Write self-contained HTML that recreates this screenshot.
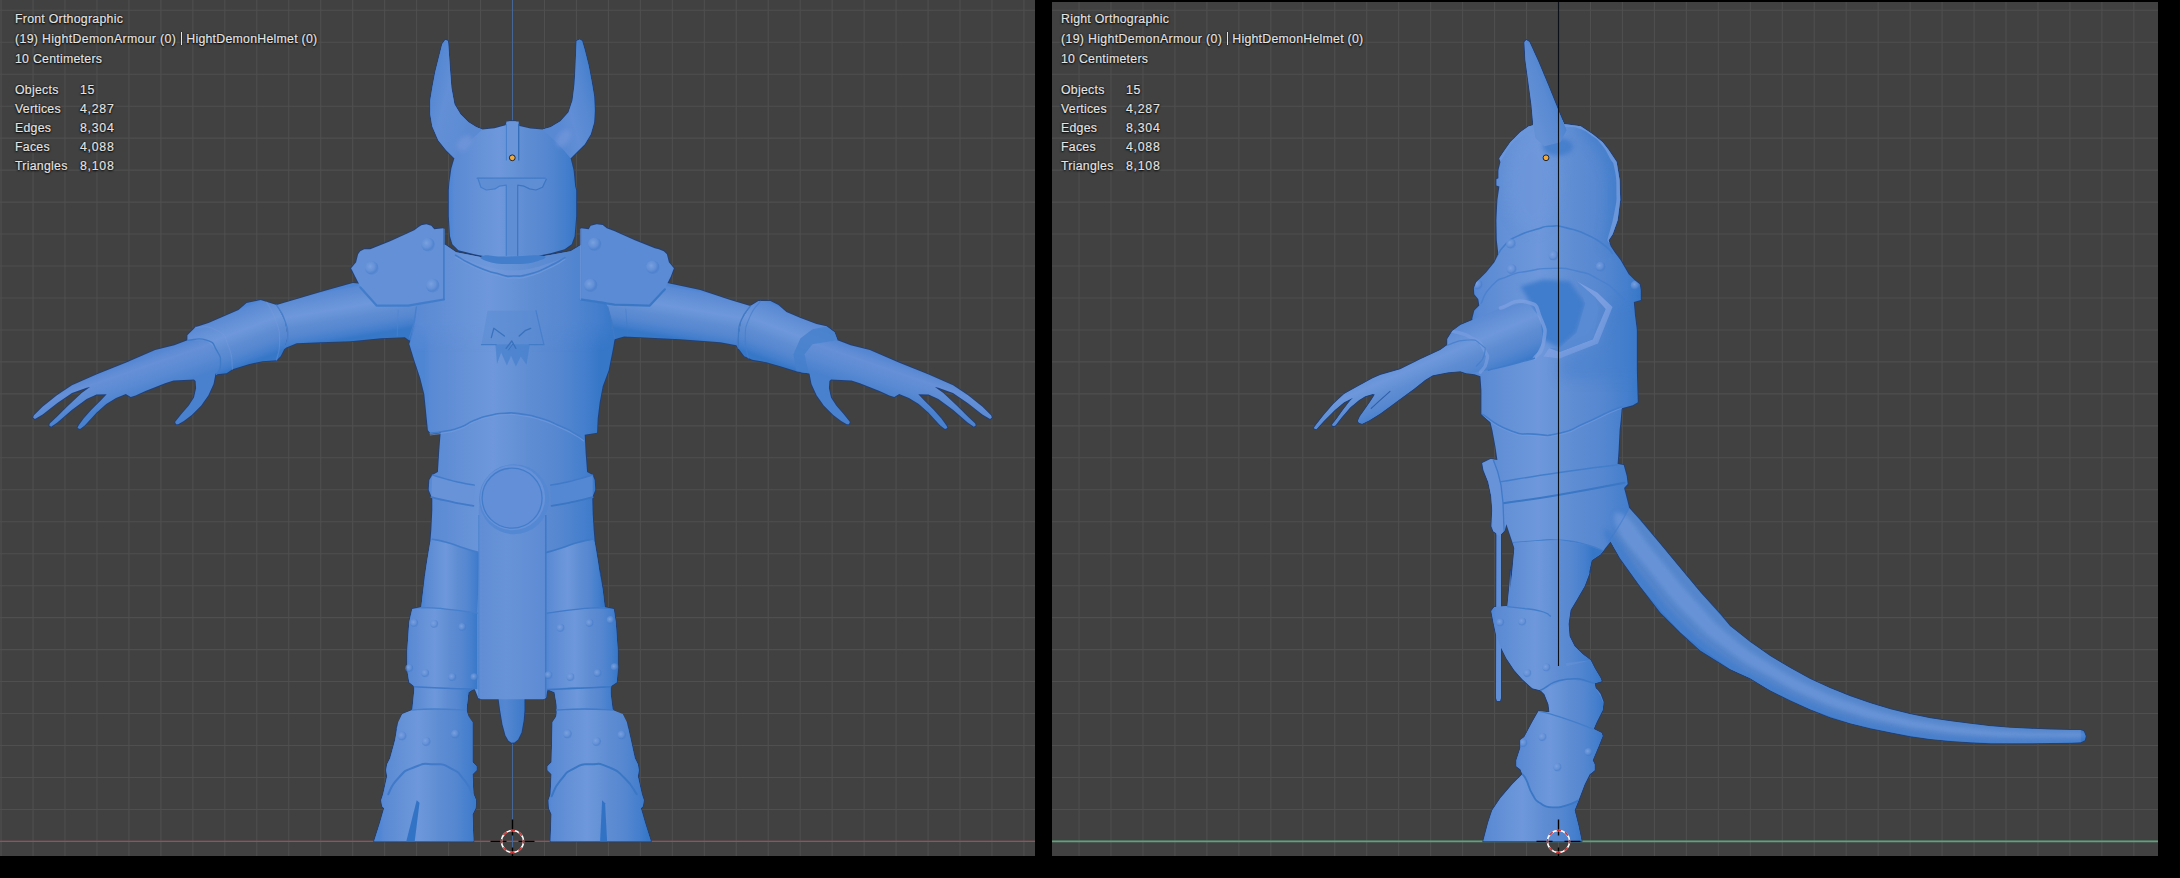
<!DOCTYPE html>
<html><head><meta charset="utf-8"><title>Blender viewport</title>
<style>
html,body{margin:0;padding:0;background:#000;}
body{width:2180px;height:878px;overflow:hidden;position:relative;font-family:"Liberation Sans",sans-serif;}
svg{position:absolute;left:0;top:0;}

.ov{position:absolute;color:#e4e4e4;font-size:12.3px;line-height:20px;white-space:pre;letter-spacing:0.27px;-webkit-text-stroke:0.2px #e4e4e4;text-shadow:0 0 2px rgba(0,0,0,.9),0 1px 2px rgba(0,0,0,.9),0 0 1px rgba(0,0,0,.8);}
.ov.n{letter-spacing:0.74px}
.bar{position:absolute;width:1.2px;height:13px;background:#e4e4e4;box-shadow:0 0 2px #000}

</style></head><body>
<svg width="2180" height="878" viewBox="0 0 2180 878">
<defs>
<clipPath id="cl"><rect x="0" y="0" width="1035" height="856"/></clipPath><clipPath id="cr"><rect x="1052" y="2" width="1106" height="854"/></clipPath><linearGradient id="gb" x1="0" y1="0" x2="1" y2="0"><stop offset="0" stop-color="#5b8bd4"/><stop offset="1" stop-color="#5b8bd4"/></linearGradient><linearGradient id="gh" gradientUnits="userSpaceOnUse" x1="449.5" y1="0" x2="576.5" y2="0"><stop offset="0" stop-color="#4f86d4"/><stop offset="0.04" stop-color="#5a8ad4"/><stop offset="0.12" stop-color="#5f8dd5"/><stop offset="0.39" stop-color="#6e98db"/><stop offset="0.6" stop-color="#5f8dd3"/><stop offset="0.77" stop-color="#5587d0"/><stop offset="0.91" stop-color="#457fcd"/><stop offset="1" stop-color="#3677c8"/></linearGradient><linearGradient id="gt" gradientUnits="userSpaceOnUse" x1="424.5" y1="0" x2="600" y2="0"><stop offset="0" stop-color="#4f86d4"/><stop offset="0.04" stop-color="#5a8ad4"/><stop offset="0.12" stop-color="#5f8dd5"/><stop offset="0.39" stop-color="#6e98db"/><stop offset="0.6" stop-color="#5f8dd3"/><stop offset="0.77" stop-color="#5587d0"/><stop offset="0.91" stop-color="#457fcd"/><stop offset="1" stop-color="#3677c8"/></linearGradient><linearGradient id="gtu" gradientUnits="userSpaceOnUse" x1="409" y1="0" x2="615" y2="0"><stop offset="0" stop-color="#4f86d4"/><stop offset="0.04" stop-color="#5a8ad4"/><stop offset="0.12" stop-color="#5f8dd5"/><stop offset="0.39" stop-color="#6e98db"/><stop offset="0.6" stop-color="#5f8dd3"/><stop offset="0.77" stop-color="#5587d0"/><stop offset="0.91" stop-color="#457fcd"/><stop offset="1" stop-color="#3677c8"/></linearGradient><linearGradient id="gfade" gradientUnits="userSpaceOnUse" x1="0" y1="322" x2="0" y2="352"><stop offset="0" stop-color="#fff"/><stop offset="1" stop-color="#000"/></linearGradient><mask id="mfade" maskUnits="userSpaceOnUse" x="380" y="230" width="270" height="130"><rect x="380" y="230" width="270" height="130" fill="url(#gfade)"/></mask><linearGradient id="gual" gradientUnits="userSpaceOnUse" x1="330" y1="290" x2="338.6" y2="340.3"><stop offset="0" stop-color="#4f86d4"/><stop offset="0.04" stop-color="#5a8ad4"/><stop offset="0.12" stop-color="#5f8dd5"/><stop offset="0.39" stop-color="#6e98db"/><stop offset="0.6" stop-color="#5f8dd3"/><stop offset="0.77" stop-color="#5587d0"/><stop offset="0.91" stop-color="#457fcd"/><stop offset="1" stop-color="#3677c8"/></linearGradient><linearGradient id="gcfl" gradientUnits="userSpaceOnUse" x1="240" y1="308" x2="259.5" y2="359.4"><stop offset="0" stop-color="#4f86d4"/><stop offset="0.04" stop-color="#5a8ad4"/><stop offset="0.12" stop-color="#5f8dd5"/><stop offset="0.39" stop-color="#6e98db"/><stop offset="0.6" stop-color="#5f8dd3"/><stop offset="0.77" stop-color="#5587d0"/><stop offset="0.91" stop-color="#457fcd"/><stop offset="1" stop-color="#3677c8"/></linearGradient><linearGradient id="ghdl" gradientUnits="userSpaceOnUse" x1="140" y1="356" x2="152.4" y2="392"><stop offset="0" stop-color="#5385d1"/><stop offset="0.3" stop-color="#6690d7"/><stop offset="0.65" stop-color="#5a8ad3"/><stop offset="1" stop-color="#4a81ce"/></linearGradient><linearGradient id="guar" gradientUnits="userSpaceOnUse" x1="695" y1="290" x2="686.4" y2="340.3"><stop offset="0" stop-color="#4f86d4"/><stop offset="0.04" stop-color="#5a8ad4"/><stop offset="0.12" stop-color="#5f8dd5"/><stop offset="0.39" stop-color="#6e98db"/><stop offset="0.6" stop-color="#5f8dd3"/><stop offset="0.77" stop-color="#5587d0"/><stop offset="0.91" stop-color="#457fcd"/><stop offset="1" stop-color="#3677c8"/></linearGradient><linearGradient id="gcfr" gradientUnits="userSpaceOnUse" x1="785" y1="308" x2="765.5" y2="359.4"><stop offset="0" stop-color="#4f86d4"/><stop offset="0.04" stop-color="#5a8ad4"/><stop offset="0.12" stop-color="#5f8dd5"/><stop offset="0.39" stop-color="#6e98db"/><stop offset="0.6" stop-color="#5f8dd3"/><stop offset="0.77" stop-color="#5587d0"/><stop offset="0.91" stop-color="#457fcd"/><stop offset="1" stop-color="#3677c8"/></linearGradient><linearGradient id="ghdr" gradientUnits="userSpaceOnUse" x1="885" y1="356" x2="872.6" y2="392"><stop offset="0" stop-color="#5385d1"/><stop offset="0.3" stop-color="#6690d7"/><stop offset="0.65" stop-color="#5a8ad3"/><stop offset="1" stop-color="#4a81ce"/></linearGradient><linearGradient id="gal" gradientUnits="userSpaceOnUse" x1="300" y1="291" x2="312" y2="347"><stop offset="0" stop-color="#4f86d4"/><stop offset="0.04" stop-color="#5a8ad4"/><stop offset="0.12" stop-color="#5f8dd5"/><stop offset="0.39" stop-color="#6e98db"/><stop offset="0.6" stop-color="#5f8dd3"/><stop offset="0.77" stop-color="#5587d0"/><stop offset="0.91" stop-color="#457fcd"/><stop offset="1" stop-color="#3677c8"/></linearGradient><linearGradient id="gar" gradientUnits="userSpaceOnUse" x1="725" y1="291" x2="713" y2="347"><stop offset="0" stop-color="#4f86d4"/><stop offset="0.04" stop-color="#5a8ad4"/><stop offset="0.12" stop-color="#5f8dd5"/><stop offset="0.39" stop-color="#6e98db"/><stop offset="0.6" stop-color="#5f8dd3"/><stop offset="0.77" stop-color="#5587d0"/><stop offset="0.91" stop-color="#457fcd"/><stop offset="1" stop-color="#3677c8"/></linearGradient><linearGradient id="gl" gradientUnits="userSpaceOnUse" x1="479" y1="0" x2="546" y2="0"><stop offset="0" stop-color="#608dd5"/><stop offset="0.4" stop-color="#6893d8"/><stop offset="1" stop-color="#5d8bd3"/></linearGradient><linearGradient id="gtl" gradientUnits="userSpaceOnUse" x1="407" y1="0" x2="478" y2="0"><stop offset="0" stop-color="#4f86d4"/><stop offset="0.04" stop-color="#5a8ad4"/><stop offset="0.12" stop-color="#5f8dd5"/><stop offset="0.39" stop-color="#6e98db"/><stop offset="0.6" stop-color="#5f8dd3"/><stop offset="0.77" stop-color="#5587d0"/><stop offset="0.91" stop-color="#457fcd"/><stop offset="1" stop-color="#3677c8"/></linearGradient><linearGradient id="gtr" gradientUnits="userSpaceOnUse" x1="547" y1="0" x2="618" y2="0"><stop offset="0" stop-color="#4f86d4"/><stop offset="0.04" stop-color="#5a8ad4"/><stop offset="0.12" stop-color="#5f8dd5"/><stop offset="0.39" stop-color="#6e98db"/><stop offset="0.6" stop-color="#5f8dd3"/><stop offset="0.77" stop-color="#5587d0"/><stop offset="0.91" stop-color="#457fcd"/><stop offset="1" stop-color="#3677c8"/></linearGradient><linearGradient id="ghl" gradientUnits="userSpaceOnUse" x1="428" y1="100" x2="472" y2="112"><stop offset="0" stop-color="#5587d2"/><stop offset="0.35" stop-color="#628fd6"/><stop offset="0.8" stop-color="#5f8dd5"/><stop offset="1" stop-color="#5b8ad3"/></linearGradient><linearGradient id="ghr" gradientUnits="userSpaceOnUse" x1="554" y1="112" x2="598" y2="100"><stop offset="0" stop-color="#5989d3"/><stop offset="0.35" stop-color="#618ed6"/><stop offset="0.75" stop-color="#5587d1"/><stop offset="1" stop-color="#4780cd"/></linearGradient><linearGradient id="gtt" gradientUnits="userSpaceOnUse" x1="497" y1="0" x2="526" y2="0"><stop offset="0" stop-color="#4f84d0"/><stop offset="0.3" stop-color="#5587d1"/><stop offset="1" stop-color="#3a79c9"/></linearGradient><linearGradient id="gll" gradientUnits="userSpaceOnUse" x1="424" y1="0" x2="480" y2="0"><stop offset="0" stop-color="#4f86d4"/><stop offset="0.04" stop-color="#5a8ad4"/><stop offset="0.12" stop-color="#5f8dd5"/><stop offset="0.39" stop-color="#6e98db"/><stop offset="0.6" stop-color="#5f8dd3"/><stop offset="0.77" stop-color="#5587d0"/><stop offset="0.91" stop-color="#457fcd"/><stop offset="1" stop-color="#3677c8"/></linearGradient><linearGradient id="glr" gradientUnits="userSpaceOnUse" x1="545" y1="0" x2="603" y2="0"><stop offset="0" stop-color="#4f86d4"/><stop offset="0.04" stop-color="#5a8ad4"/><stop offset="0.12" stop-color="#5f8dd5"/><stop offset="0.39" stop-color="#6e98db"/><stop offset="0.6" stop-color="#5f8dd3"/><stop offset="0.77" stop-color="#5587d0"/><stop offset="0.91" stop-color="#457fcd"/><stop offset="1" stop-color="#3677c8"/></linearGradient><linearGradient id="gsl" gradientUnits="userSpaceOnUse" x1="412" y1="0" x2="471" y2="0"><stop offset="0" stop-color="#4f86d4"/><stop offset="0.04" stop-color="#5a8ad4"/><stop offset="0.12" stop-color="#5f8dd5"/><stop offset="0.39" stop-color="#6e98db"/><stop offset="0.6" stop-color="#5f8dd3"/><stop offset="0.77" stop-color="#5587d0"/><stop offset="0.91" stop-color="#457fcd"/><stop offset="1" stop-color="#3677c8"/></linearGradient><linearGradient id="gsr" gradientUnits="userSpaceOnUse" x1="553" y1="0" x2="615" y2="0"><stop offset="0" stop-color="#4f86d4"/><stop offset="0.04" stop-color="#5a8ad4"/><stop offset="0.12" stop-color="#5f8dd5"/><stop offset="0.39" stop-color="#6e98db"/><stop offset="0.6" stop-color="#5f8dd3"/><stop offset="0.77" stop-color="#5587d0"/><stop offset="0.91" stop-color="#457fcd"/><stop offset="1" stop-color="#3677c8"/></linearGradient><linearGradient id="ggl" gradientUnits="userSpaceOnUse" x1="380" y1="0" x2="478" y2="0"><stop offset="0" stop-color="#4f86d4"/><stop offset="0.04" stop-color="#5a8ad4"/><stop offset="0.12" stop-color="#5f8dd5"/><stop offset="0.39" stop-color="#6e98db"/><stop offset="0.6" stop-color="#5f8dd3"/><stop offset="0.77" stop-color="#5587d0"/><stop offset="0.91" stop-color="#457fcd"/><stop offset="1" stop-color="#3677c8"/></linearGradient><linearGradient id="ggr" gradientUnits="userSpaceOnUse" x1="548" y1="0" x2="648" y2="0"><stop offset="0" stop-color="#4f86d4"/><stop offset="0.04" stop-color="#5a8ad4"/><stop offset="0.12" stop-color="#5f8dd5"/><stop offset="0.39" stop-color="#6e98db"/><stop offset="0.6" stop-color="#5f8dd3"/><stop offset="0.77" stop-color="#5587d0"/><stop offset="0.91" stop-color="#457fcd"/><stop offset="1" stop-color="#3677c8"/></linearGradient><linearGradient id="grt" gradientUnits="userSpaceOnUse" x1="1505" y1="0" x2="1593" y2="0"><stop offset="0" stop-color="#4f86d4"/><stop offset="0.04" stop-color="#5a8ad4"/><stop offset="0.12" stop-color="#5f8dd5"/><stop offset="0.39" stop-color="#6e98db"/><stop offset="0.6" stop-color="#5f8dd3"/><stop offset="0.77" stop-color="#5587d0"/><stop offset="0.91" stop-color="#457fcd"/><stop offset="1" stop-color="#3677c8"/></linearGradient><linearGradient id="grf" gradientUnits="userSpaceOnUse" x1="1483" y1="0" x2="1584" y2="0"><stop offset="0" stop-color="#4f86d4"/><stop offset="0.04" stop-color="#5a8ad4"/><stop offset="0.12" stop-color="#5f8dd5"/><stop offset="0.39" stop-color="#6e98db"/><stop offset="0.6" stop-color="#5f8dd3"/><stop offset="0.77" stop-color="#5587d0"/><stop offset="0.91" stop-color="#457fcd"/><stop offset="1" stop-color="#3677c8"/></linearGradient><linearGradient id="gr" gradientUnits="userSpaceOnUse" x1="1472" y1="0" x2="1642" y2="0"><stop offset="0" stop-color="#4f86d4"/><stop offset="0.04" stop-color="#5a8ad4"/><stop offset="0.12" stop-color="#5f8dd5"/><stop offset="0.39" stop-color="#6e98db"/><stop offset="0.6" stop-color="#5f8dd3"/><stop offset="0.77" stop-color="#5587d0"/><stop offset="0.91" stop-color="#457fcd"/><stop offset="1" stop-color="#3677c8"/></linearGradient><linearGradient id="grh" gradientUnits="userSpaceOnUse" x1="1528" y1="100" x2="1562" y2="88"><stop offset="0" stop-color="#6490d6"/><stop offset="0.5" stop-color="#598ad2"/><stop offset="1" stop-color="#3f7dcc"/></linearGradient><linearGradient id="gra" gradientUnits="userSpaceOnUse" x1="1440" y1="330" x2="1465" y2="388"><stop offset="0" stop-color="#4f86d4"/><stop offset="0.04" stop-color="#5a8ad4"/><stop offset="0.12" stop-color="#5f8dd5"/><stop offset="0.39" stop-color="#6e98db"/><stop offset="0.6" stop-color="#5f8dd3"/><stop offset="0.77" stop-color="#5587d0"/><stop offset="0.91" stop-color="#457fcd"/><stop offset="1" stop-color="#3677c8"/></linearGradient><linearGradient id="grk" gradientUnits="userSpaceOnUse" x1="1492" y1="0" x2="1602" y2="0"><stop offset="0" stop-color="#4f86d4"/><stop offset="0.04" stop-color="#5a8ad4"/><stop offset="0.12" stop-color="#5f8dd5"/><stop offset="0.39" stop-color="#6e98db"/><stop offset="0.6" stop-color="#5f8dd3"/><stop offset="0.77" stop-color="#5587d0"/><stop offset="0.91" stop-color="#457fcd"/><stop offset="1" stop-color="#3677c8"/></linearGradient><linearGradient id="grg" gradientUnits="userSpaceOnUse" x1="1516" y1="0" x2="1604" y2="0"><stop offset="0" stop-color="#4f86d4"/><stop offset="0.04" stop-color="#5a8ad4"/><stop offset="0.12" stop-color="#5f8dd5"/><stop offset="0.39" stop-color="#6e98db"/><stop offset="0.6" stop-color="#5f8dd3"/><stop offset="0.77" stop-color="#5587d0"/><stop offset="0.91" stop-color="#457fcd"/><stop offset="1" stop-color="#3677c8"/></linearGradient><filter id="b2" x="-20%" y="-20%" width="140%" height="140%"><feGaussianBlur stdDeviation="2"/></filter><filter id="b6" x="-30%" y="-30%" width="160%" height="160%"><feGaussianBlur stdDeviation="6"/></filter><radialGradient id="rv" cx="0.38" cy="0.38" r="0.62"><stop offset="0" stop-color="#7ba3e0" stop-opacity="0.95"/><stop offset="0.55" stop-color="#6893d8" stop-opacity="0.6"/><stop offset="0.85" stop-color="#447bc9" stop-opacity="0.55"/><stop offset="1" stop-color="#3f78c6" stop-opacity="0.25"/></radialGradient><clipPath id="cRb"><polygon points="1533.4,125.2 1528.4,126.6 1520.4,132.2 1510.4,142.3 1503.4,152.3 1499.4,158.3 1500.4,162.3 1498.4,170.3 1498.4,178.3 1496.4,179.3 1496.4,185.4 1499.4,186.4 1497.4,200.1 1496.4,220.2 1496.8,240.2 1498.4,254.2 1494.4,262.3 1486.3,272.3 1480.3,278.3 1476.3,282.3 1473.9,288.3 1474.3,294.3 1478.3,299.3 1479.3,305.4 1474.3,310.4 1472.3,318.4 1472.4,320.1 1460.4,325.1 1452.3,331.1 1447.3,339.1 1447.3,345.1 1440.3,350.1 1420.3,359.2 1400.2,369.2 1380.2,374.9 1372.7,378.3 1357.6,386.5 1344.1,394.1 1333.6,403.8 1323.8,415.1 1314.8,426.4 1313.9,428.3 1316.3,429.2 1323.8,421.1 1335.1,409.8 1344.1,402.3 1353.1,397.8 1350.1,400.8 1342.6,410.6 1336.6,418.9 1332.2,424.5 1332.7,426.1 1335.1,425.8 1341.1,418.1 1350.1,407.6 1359.1,400.1 1365.2,396.3 1372.7,394.1 1374.9,394.4 1370.4,401.6 1365.2,409.1 1359.9,416.6 1357.9,421.1 1359.0,422.8 1362.1,423.8 1368.9,420.4 1380.2,413.6 1391.5,405.3 1402.7,397.1 1414.0,388.8 1425.3,379.8 1432.8,375.3 1448.3,372.2 1460.4,371.2 1466.4,373.2 1474.4,374.2 1480.4,376.2 1481.4,390.2 1481.4,414.3 1490.4,422.3 1492.4,430.3 1495.4,446.4 1497.5,460.4 1497.4,460.1 1490.3,459.1 1482.3,463.1 1483.3,470.1 1488.3,482.1 1491.3,496.2 1492.3,510.2 1491.3,526.2 1493.4,531.2 1496.4,533.2 1496.0,698.3 1497.0,700.9 1500.0,700.9 1501.0,698.3 1501.0,534.2 1504.8,530.2 1506.4,524.2 1510.4,536.2 1514.4,548.3 1512.4,570.3 1510.4,590.4 1510.4,570.0 1509.4,586.0 1507.4,606.1 1494.4,607.1 1491.3,611.1 1493.4,622.1 1496.4,636.2 1500.4,646.2 1506.4,658.2 1514.4,670.2 1522.4,679.3 1532.4,688.3 1540.5,690.3 1544.5,694.3 1548.5,704.3 1549.5,712.3 1538.5,711.3 1532.4,722.1 1524.4,737.1 1520.4,740.1 1520.4,748.1 1516.4,760.2 1516.4,766.2 1520.4,769.2 1522.4,774.2 1512.4,784.2 1500.4,798.2 1492.3,810.3 1488.3,822.3 1483.3,841.3 1581.6,841.3 1578.5,826.3 1574.5,810.3 1578.5,800.3 1584.6,784.2 1589.6,774.2 1594.6,770.2 1594.6,764.2 1592.6,760.2 1598.6,746.1 1602.6,736.1 1601.6,733.1 1593.6,729.1 1596.6,722.1 1602.6,710.0 1603.6,702.0 1600.6,694.0 1597.6,690.0 1595.6,688.3 1594.6,683.3 1601.6,681.3 1600.6,678.2 1594.6,668.2 1590.6,660.2 1582.6,654.2 1574.5,646.2 1569.5,636.2 1568.5,624.1 1570.5,610.1 1576.5,600.1 1584.6,586.0 1590.6,570.0 1588.6,574.3 1591.6,560.3 1600.6,554.3 1610.6,541.3 1620.1,558.2 1640.2,586.2 1660.2,612.3 1680.3,632.3 1700.3,650.4 1730.0,669.1 1750.0,678.1 1770.1,690.2 1790.1,700.2 1810.2,709.2 1830.2,717.2 1850.3,723.2 1870.3,728.2 1890.4,732.3 1910.4,736.3 1930.5,738.9 1950.5,740.9 1970.6,742.3 1990.6,743.3 2010.6,743.3 2030.7,743.3 2050.7,742.9 2070.8,742.7 2080.8,742.3 2084.8,740.3 2085.8,736.3 2083.8,731.3 2080.8,729.9 2070.8,729.9 2050.7,729.5 2030.7,728.8 2010.6,727.8 1990.6,726.2 1970.6,723.8 1950.5,721.2 1930.5,718.2 1910.4,714.2 1890.4,709.2 1870.3,703.2 1850.3,696.2 1830.2,688.2 1810.2,679.1 1790.1,668.1 1770.1,656.1 1750.0,642.1 1730.0,626.0 1720.4,614.3 1700.3,592.3 1680.3,568.2 1660.2,544.1 1640.2,520.1 1629.2,508.1 1627.2,500.0 1624.1,488.0 1627.7,484.1 1626.7,476.1 1623.7,465.1 1617.6,464.1 1618.6,450.0 1619.6,430.0 1620.7,420.3 1621.7,408.3 1632.8,405.3 1637.8,402.3 1636.8,370.2 1636.8,330.1 1634.8,314.1 1633.8,302.0 1640.8,300.0 1640.8,290.0 1639.7,284.3 1634.7,280.3 1628.7,274.3 1620.6,260.3 1614.6,252.2 1610.6,246.2 1608.6,240.2 1612.6,234.2 1617.6,220.2 1620.2,200.1 1619.6,180.1 1616.6,162.0 1608.6,150.0 1602.6,142.3 1592.6,134.2 1580.6,126.2 1565.5,124.2"/><polygon points="1533.4,126.2 1531.4,104.2 1528.4,82.1 1525.4,60.1 1524.4,42.0 1526.4,40.0 1529.4,42.0 1538.5,62.1 1548.5,86.1 1557.5,108.2 1562.5,120.2 1566.5,130.2"/></clipPath>
</defs>
<rect x="0" y="0" width="2180" height="878" fill="#000"/>
<rect x="0" y="0" width="1035" height="856" fill="#414141"/>
<rect x="1052" y="2" width="1106" height="854" fill="#414141"/>
<g clip-path="url(#cl)"><path d="M1.06,0V856M33.02,0V856M64.99,0V856M96.95,0V856M128.92,0V856M160.88,0V856M192.85,0V856M224.81,0V856M256.78,0V856M288.75,0V856M320.71,0V856M352.68,0V856M384.64,0V856M416.61,0V856M448.57,0V856M480.54,0V856M512.50,0V856M544.47,0V856M576.43,0V856M608.39,0V856M640.36,0V856M672.33,0V856M704.29,0V856M736.25,0V856M768.22,0V856M800.18,0V856M832.15,0V856M864.12,0V856M896.08,0V856M928.05,0V856M960.01,0V856M991.98,0V856M1023.94,0V856M0,841.40H1035M0,809.43H1035M0,777.47H1035M0,745.50H1035M0,713.54H1035M0,681.57H1035M0,649.61H1035M0,617.64H1035M0,585.68H1035M0,553.71H1035M0,521.75H1035M0,489.78H1035M0,457.82H1035M0,425.85H1035M0,393.89H1035M0,361.92H1035M0,329.96H1035M0,297.99H1035M0,266.03H1035M0,234.06H1035M0,202.10H1035M0,170.13H1035M0,138.17H1035M0,106.20H1035M0,74.24H1035M0,42.27H1035M0,10.31H1035" stroke="#4f4f4f" stroke-width="1.1" fill="none"/></g>
<g clip-path="url(#cr)"><path d="M1079.03,0V856M1110.99,0V856M1142.95,0V856M1174.92,0V856M1206.88,0V856M1238.85,0V856M1270.82,0V856M1302.78,0V856M1334.74,0V856M1366.71,0V856M1398.67,0V856M1430.64,0V856M1462.61,0V856M1494.57,0V856M1526.54,0V856M1558.50,0V856M1590.46,0V856M1622.43,0V856M1654.39,0V856M1686.36,0V856M1718.33,0V856M1750.29,0V856M1782.26,0V856M1814.22,0V856M1846.18,0V856M1878.15,0V856M1910.12,0V856M1942.08,0V856M1974.05,0V856M2006.01,0V856M2037.97,0V856M2069.94,0V856M2101.90,0V856M2133.87,0V856M1052,841.40H2158M1052,809.43H2158M1052,777.47H2158M1052,745.50H2158M1052,713.54H2158M1052,681.57H2158M1052,649.61H2158M1052,617.64H2158M1052,585.68H2158M1052,553.71H2158M1052,521.75H2158M1052,489.78H2158M1052,457.82H2158M1052,425.85H2158M1052,393.89H2158M1052,361.92H2158M1052,329.96H2158M1052,297.99H2158M1052,266.03H2158M1052,234.06H2158M1052,202.10H2158M1052,170.13H2158M1052,138.17H2158M1052,106.20H2158M1052,74.24H2158M1052,42.27H2158M1052,10.31H2158" stroke="#4f4f4f" stroke-width="1.1" fill="none"/></g>
<line x1="0" y1="841.4" x2="1035" y2="841.4" stroke="#9a4f5a" stroke-width="1.2"/>
<line x1="1052" y1="841.4" x2="2158" y2="841.4" stroke="#5fa37c" stroke-width="1.6"/>
<line x1="512.5" y1="0" x2="512.5" y2="856" stroke="#466a9e" stroke-width="1" opacity="0.9"/>

<g id="leftfig">
<g stroke="#1f4079" stroke-width="1.8" stroke-linejoin="round"><polygon points="194.5,339.2 187.5,340.2 174.4,345.2 155.2,350.0 125.8,362.7 96.4,374.5 72.0,385.3 57.3,395.1 42.6,406.8 33.8,415.6 33.1,417.6 34.9,419.1 42.6,414.6 57.3,402.9 72.0,393.1 86.6,387.7 90.1,387.0 81.7,393.1 67.1,406.8 57.3,416.6 49.9,423.5 49.2,425.4 51.2,426.7 57.3,422.5 72.0,409.7 86.6,399.0 96.4,394.6 106.7,394.3 101.3,400.0 91.5,409.7 83.7,418.6 78.3,425.9 77.6,427.9 80.0,428.9 84.7,425.4 96.4,412.7 106.2,403.9 116.0,398.0 125.8,394.1 130.7,397.0 135.6,395.5 145.4,391.1 165.0,383.3 173.5,380.5 194.0,379.4 195.6,381.0 196.1,388.2 194.0,397.4 188.9,405.6 181.7,413.8 175.1,422.0 176.1,424.2 178.1,424.2 183.8,420.9 192.0,414.8 201.2,405.6 208.4,395.3 213.5,384.1 215.5,373.8 216.5,373.3 224.5,372.3 229.6,354.2 222.5,340.2" fill="url(#ghdl)" />
<polygon points="352.8,283.1 320.7,292.1 276.6,305.1 284.7,320.1 287.7,336.2 284.7,348.2 296.7,343.2 320.7,342.2 350.8,341.2 380.9,338.2 404.9,337.2 408.9,340.2 431.0,344.2 431.0,290.1" fill="url(#gual)" />
<polygon points="276.6,305.1 260.6,300.1 246.6,303.1 238.5,310.1 208.5,323.1 195.4,327.2 187.4,335.2 187.4,340.2 206.5,340.2 216.5,350.2 220.5,364.2 216.5,374.3 226.5,373.3 232.5,369.3 248.6,364.2 262.6,361.2 276.6,360.2 280.6,356.2 284.7,348.2 287.7,336.2 284.7,320.1" fill="url(#gcfl)" />
<polygon points="830.5,339.2 837.5,340.2 850.6,345.2 869.8,350.0 899.2,362.7 928.6,374.5 953.0,385.3 967.7,395.1 982.4,406.8 991.2,415.6 991.9,417.6 990.1,419.1 982.4,414.6 967.7,402.9 953.0,393.1 938.4,387.7 934.9,387.0 943.3,393.1 957.9,406.8 967.7,416.6 975.1,423.5 975.8,425.4 973.8,426.7 967.7,422.5 953.0,409.7 938.4,399.0 928.6,394.6 918.3,394.3 923.7,400.0 933.5,409.7 941.3,418.6 946.7,425.9 947.4,427.9 945.0,428.9 940.3,425.4 928.6,412.7 918.8,403.9 909.0,398.0 899.2,394.1 894.3,397.0 889.4,395.5 879.6,391.1 860.0,383.3 851.5,380.5 831.0,379.4 829.4,381.0 828.9,388.2 831.0,397.4 836.1,405.6 843.3,413.8 849.9,422.0 848.9,424.2 846.9,424.2 841.2,420.9 833.0,414.8 823.8,405.6 816.6,395.3 811.5,384.1 809.5,373.8 808.5,373.3 800.5,372.3 795.4,354.2 802.5,340.2" fill="url(#ghdr)" />
<polygon points="667.2,283.1 700.2,290.1 730.3,300.1 750.3,306.1 741.3,320.1 738.3,336.2 738.3,348.2 736.3,345.2 720.3,342.2 680.2,339.2 640.1,337.2 624.1,336.6 618.0,338.2 600.0,344.2 600.0,290.1" fill="url(#guar)" />
<polygon points="750.3,306.1 758.4,301.1 770.4,301.1 778.4,305.1 786.4,312.1 800.5,318.1 816.5,324.1 826.5,326.2 834.5,332.2 837.5,340.2 812.5,344.2 804.5,354.2 808.5,373.3 796.5,371.3 780.4,366.2 766.4,362.2 752.3,359.8 744.3,356.2 738.3,348.2 738.3,336.2 741.3,320.1" fill="url(#gcfr)" />
<polygon points="443.5,244.7 445.1,244.7 456.0,252.2 484.1,257.7 541.5,256.6 570.7,251.2 581.5,244.7 583.1,244.7 614.7,338.1 612.7,350.1 608.7,370.2 602.7,386.2 599.7,402.3 597.7,418.3 597.1,432.7 584.7,434.7 585.7,454.1 587.1,472.1 592.7,475.1 594.7,480.1 595.3,490.1 592.7,496.2 592.3,499.2 592.7,514.2 593.7,530.2 594.7,542.3 597.7,560.3 600.7,580.3 599.7,570.0 602.7,590.0 604.7,607.1 613.7,609.1 615.7,622.1 617.7,650.2 617.7,670.2 616.7,682.3 610.7,686.3 610.7,694.3 612.7,710.3 622.8,715.3 628.8,730.4 626.8,722.1 630.8,740.1 634.8,758.2 637.8,764.2 638.8,770.2 637.8,776.2 641.8,794.2 643.8,800.3 642.8,806.3 640.8,808.3 644.8,822.3 650.8,841.3 550.6,841.3 551.6,814.3 549.0,808.3 548.6,800.3 550.6,794.2 551.6,774.2 547.6,770.2 547.6,766.2 551.6,762.2 552.6,722.1 555.6,718.3 557.6,710.3 554.6,692.3 547.6,689.3 545.6,698.3 478.4,698.3 474.4,688.3 468.4,692.3 466.4,710.3 468.4,718.3 472.4,722.1 472.4,762.2 476.4,766.2 476.4,770.2 472.4,774.2 473.4,794.2 476.0,800.3 475.4,808.3 472.4,814.3 473.4,841.3 374.2,841.3 380.2,822.3 384.2,808.3 382.2,806.3 381.2,800.3 383.2,794.2 387.2,776.2 386.2,770.2 387.2,764.2 390.2,758.2 395.2,740.1 398.2,722.1 396.2,730.4 402.2,714.3 412.3,710.3 414.3,690.3 414.3,686.3 409.3,682.3 407.3,670.2 407.3,650.2 409.3,622.1 412.3,609.1 421.3,607.1 423.3,590.0 426.3,570.0 424.3,580.3 427.3,560.3 430.3,542.3 431.3,530.2 432.3,510.2 432.3,498.2 431.3,496.2 428.7,490.1 429.3,480.1 432.3,475.1 437.9,472.1 439.3,450.0 440.7,432.0 430.3,433.0 427.9,430.3 426.3,414.3 424.3,394.2 420.3,378.2 414.3,360.2 409.3,344.1" fill="url(#gt)" />
<polygon points="443.5,244.7 445.1,244.7 456.0,252.2 484.1,257.7 541.5,256.6 570.7,251.2 581.5,244.7 583.1,244.7 607.7,307 611.7,322 614.7,338.1 612.7,352 414.3,352 409.3,344.1 414.3,322 416.3,307" fill="url(#gtu)" mask="url(#mfade)"/>
<polygon points="498.5,698.3 500.1,710.3 502.5,724.4 505.5,735.4 508.5,740.8 511.5,742.8 514.5,742.4 518.1,739.4 521.5,732.4 523.7,720.3 524.5,710.3 524.5,698.3" fill="url(#gtt)" />
<polygon points="443.3,228.2 434.3,229.2 431.3,225.8 426.3,224.2 421.3,225.2 418.3,227.2 414.3,230.2 390.2,241.2 370.2,249.2 364.2,249.2 360.2,251.2 358.1,254.2 356.1,262.3 351.1,268.3 354.1,274.3 360.2,286.3 376.2,304.4 408.3,304.4 443.3,298.3" fill="#6390d7" />
<polygon points="581.1,228.2 588.7,229.2 590.7,225.8 596.7,224.2 602.7,225.0 606.7,228.2 614.7,231.2 634.8,240.2 654.8,248.2 658.8,249.2 663.8,251.2 666.9,254.2 668.9,262.3 673.9,268.3 670.9,276.3 664.9,288.3 649.8,304.4 614.7,303.4 581.1,298.3" fill="#5b8bd4" />
<polygon points="445.3,40.0 442.3,44.0 439.3,56.1 435.3,72.1 432.3,88.1 430.3,100.2 430.3,114.2 432.3,126.2 438.3,140.3 446.3,150.3 454.4,158.3 451.4,168.3 449.4,182.3 448.8,190.1 448.8,216.2 450.0,236.2 452.4,244.2 458.4,250.2 474.4,254.2 484.4,256.2 494.5,259.3 512.5,259.9 530.5,258.8 540.6,255.2 550.6,253.2 564.6,249.2 571.6,244.2 574.6,236.2 576.2,216.2 576.2,190.1 575.2,186.4 573.6,170.3 570.6,158.3 576.6,152.3 584.7,144.3 590.7,134.2 594.1,122.2 594.7,110.2 594.1,96.2 591.7,82.1 588.7,66.1 584.7,50.0 582.1,41.0 579.7,39.6 576.6,41.0 576.2,50.0 575.6,66.1 574.6,84.1 572.6,100.2 568.6,112.2 560.6,121.2 550.6,127.2 542.6,129.6 530.5,128.6 518.5,125.8 517.5,122.6 515.5,121.2 509.5,121.2 506.9,122.2 505.5,125.2 494.5,128.2 482.4,129.6 476.4,127.2 468.4,122.2 460.4,114.2 454.4,104.2 451.4,88.1 450.0,70.1 448.8,52.1 448.0,41.0" fill="url(#gh)" /></g>
<g id="Lsil"><polygon points="194.5,339.2 187.5,340.2 174.4,345.2 155.2,350.0 125.8,362.7 96.4,374.5 72.0,385.3 57.3,395.1 42.6,406.8 33.8,415.6 33.1,417.6 34.9,419.1 42.6,414.6 57.3,402.9 72.0,393.1 86.6,387.7 90.1,387.0 81.7,393.1 67.1,406.8 57.3,416.6 49.9,423.5 49.2,425.4 51.2,426.7 57.3,422.5 72.0,409.7 86.6,399.0 96.4,394.6 106.7,394.3 101.3,400.0 91.5,409.7 83.7,418.6 78.3,425.9 77.6,427.9 80.0,428.9 84.7,425.4 96.4,412.7 106.2,403.9 116.0,398.0 125.8,394.1 130.7,397.0 135.6,395.5 145.4,391.1 165.0,383.3 173.5,380.5 194.0,379.4 195.6,381.0 196.1,388.2 194.0,397.4 188.9,405.6 181.7,413.8 175.1,422.0 176.1,424.2 178.1,424.2 183.8,420.9 192.0,414.8 201.2,405.6 208.4,395.3 213.5,384.1 215.5,373.8 216.5,373.3 224.5,372.3 229.6,354.2 222.5,340.2" fill="url(#ghdl)" />
<polygon points="352.8,283.1 320.7,292.1 276.6,305.1 284.7,320.1 287.7,336.2 284.7,348.2 296.7,343.2 320.7,342.2 350.8,341.2 380.9,338.2 404.9,337.2 408.9,340.2 431.0,344.2 431.0,290.1" fill="url(#gual)" />
<polygon points="276.6,305.1 260.6,300.1 246.6,303.1 238.5,310.1 208.5,323.1 195.4,327.2 187.4,335.2 187.4,340.2 206.5,340.2 216.5,350.2 220.5,364.2 216.5,374.3 226.5,373.3 232.5,369.3 248.6,364.2 262.6,361.2 276.6,360.2 280.6,356.2 284.7,348.2 287.7,336.2 284.7,320.1" fill="url(#gcfl)" />
<polygon points="830.5,339.2 837.5,340.2 850.6,345.2 869.8,350.0 899.2,362.7 928.6,374.5 953.0,385.3 967.7,395.1 982.4,406.8 991.2,415.6 991.9,417.6 990.1,419.1 982.4,414.6 967.7,402.9 953.0,393.1 938.4,387.7 934.9,387.0 943.3,393.1 957.9,406.8 967.7,416.6 975.1,423.5 975.8,425.4 973.8,426.7 967.7,422.5 953.0,409.7 938.4,399.0 928.6,394.6 918.3,394.3 923.7,400.0 933.5,409.7 941.3,418.6 946.7,425.9 947.4,427.9 945.0,428.9 940.3,425.4 928.6,412.7 918.8,403.9 909.0,398.0 899.2,394.1 894.3,397.0 889.4,395.5 879.6,391.1 860.0,383.3 851.5,380.5 831.0,379.4 829.4,381.0 828.9,388.2 831.0,397.4 836.1,405.6 843.3,413.8 849.9,422.0 848.9,424.2 846.9,424.2 841.2,420.9 833.0,414.8 823.8,405.6 816.6,395.3 811.5,384.1 809.5,373.8 808.5,373.3 800.5,372.3 795.4,354.2 802.5,340.2" fill="url(#ghdr)" />
<polygon points="667.2,283.1 700.2,290.1 730.3,300.1 750.3,306.1 741.3,320.1 738.3,336.2 738.3,348.2 736.3,345.2 720.3,342.2 680.2,339.2 640.1,337.2 624.1,336.6 618.0,338.2 600.0,344.2 600.0,290.1" fill="url(#guar)" />
<polygon points="750.3,306.1 758.4,301.1 770.4,301.1 778.4,305.1 786.4,312.1 800.5,318.1 816.5,324.1 826.5,326.2 834.5,332.2 837.5,340.2 812.5,344.2 804.5,354.2 808.5,373.3 796.5,371.3 780.4,366.2 766.4,362.2 752.3,359.8 744.3,356.2 738.3,348.2 738.3,336.2 741.3,320.1" fill="url(#gcfr)" />
<polygon points="443.5,244.7 445.1,244.7 456.0,252.2 484.1,257.7 541.5,256.6 570.7,251.2 581.5,244.7 583.1,244.7 614.7,338.1 612.7,350.1 608.7,370.2 602.7,386.2 599.7,402.3 597.7,418.3 597.1,432.7 584.7,434.7 585.7,454.1 587.1,472.1 592.7,475.1 594.7,480.1 595.3,490.1 592.7,496.2 592.3,499.2 592.7,514.2 593.7,530.2 594.7,542.3 597.7,560.3 600.7,580.3 599.7,570.0 602.7,590.0 604.7,607.1 613.7,609.1 615.7,622.1 617.7,650.2 617.7,670.2 616.7,682.3 610.7,686.3 610.7,694.3 612.7,710.3 622.8,715.3 628.8,730.4 626.8,722.1 630.8,740.1 634.8,758.2 637.8,764.2 638.8,770.2 637.8,776.2 641.8,794.2 643.8,800.3 642.8,806.3 640.8,808.3 644.8,822.3 650.8,841.3 550.6,841.3 551.6,814.3 549.0,808.3 548.6,800.3 550.6,794.2 551.6,774.2 547.6,770.2 547.6,766.2 551.6,762.2 552.6,722.1 555.6,718.3 557.6,710.3 554.6,692.3 547.6,689.3 545.6,698.3 478.4,698.3 474.4,688.3 468.4,692.3 466.4,710.3 468.4,718.3 472.4,722.1 472.4,762.2 476.4,766.2 476.4,770.2 472.4,774.2 473.4,794.2 476.0,800.3 475.4,808.3 472.4,814.3 473.4,841.3 374.2,841.3 380.2,822.3 384.2,808.3 382.2,806.3 381.2,800.3 383.2,794.2 387.2,776.2 386.2,770.2 387.2,764.2 390.2,758.2 395.2,740.1 398.2,722.1 396.2,730.4 402.2,714.3 412.3,710.3 414.3,690.3 414.3,686.3 409.3,682.3 407.3,670.2 407.3,650.2 409.3,622.1 412.3,609.1 421.3,607.1 423.3,590.0 426.3,570.0 424.3,580.3 427.3,560.3 430.3,542.3 431.3,530.2 432.3,510.2 432.3,498.2 431.3,496.2 428.7,490.1 429.3,480.1 432.3,475.1 437.9,472.1 439.3,450.0 440.7,432.0 430.3,433.0 427.9,430.3 426.3,414.3 424.3,394.2 420.3,378.2 414.3,360.2 409.3,344.1" fill="url(#gt)" />
<polygon points="443.5,244.7 445.1,244.7 456.0,252.2 484.1,257.7 541.5,256.6 570.7,251.2 581.5,244.7 583.1,244.7 607.7,307 611.7,322 614.7,338.1 612.7,352 414.3,352 409.3,344.1 414.3,322 416.3,307" fill="url(#gtu)" mask="url(#mfade)"/>
<polygon points="498.5,698.3 500.1,710.3 502.5,724.4 505.5,735.4 508.5,740.8 511.5,742.8 514.5,742.4 518.1,739.4 521.5,732.4 523.7,720.3 524.5,710.3 524.5,698.3" fill="url(#gtt)" />
<polygon points="443.3,228.2 434.3,229.2 431.3,225.8 426.3,224.2 421.3,225.2 418.3,227.2 414.3,230.2 390.2,241.2 370.2,249.2 364.2,249.2 360.2,251.2 358.1,254.2 356.1,262.3 351.1,268.3 354.1,274.3 360.2,286.3 376.2,304.4 408.3,304.4 443.3,298.3" fill="#6390d7" />
<polygon points="581.1,228.2 588.7,229.2 590.7,225.8 596.7,224.2 602.7,225.0 606.7,228.2 614.7,231.2 634.8,240.2 654.8,248.2 658.8,249.2 663.8,251.2 666.9,254.2 668.9,262.3 673.9,268.3 670.9,276.3 664.9,288.3 649.8,304.4 614.7,303.4 581.1,298.3" fill="#5b8bd4" />
<polygon points="445.3,40.0 442.3,44.0 439.3,56.1 435.3,72.1 432.3,88.1 430.3,100.2 430.3,114.2 432.3,126.2 438.3,140.3 446.3,150.3 454.4,158.3 451.4,168.3 449.4,182.3 448.8,190.1 448.8,216.2 450.0,236.2 452.4,244.2 458.4,250.2 474.4,254.2 484.4,256.2 494.5,259.3 512.5,259.9 530.5,258.8 540.6,255.2 550.6,253.2 564.6,249.2 571.6,244.2 574.6,236.2 576.2,216.2 576.2,190.1 575.2,186.4 573.6,170.3 570.6,158.3 576.6,152.3 584.7,144.3 590.7,134.2 594.1,122.2 594.7,110.2 594.1,96.2 591.7,82.1 588.7,66.1 584.7,50.0 582.1,41.0 579.7,39.6 576.6,41.0 576.2,50.0 575.6,66.1 574.6,84.1 572.6,100.2 568.6,112.2 560.6,121.2 550.6,127.2 542.6,129.6 530.5,128.6 518.5,125.8 517.5,122.6 515.5,121.2 509.5,121.2 506.9,122.2 505.5,125.2 494.5,128.2 482.4,129.6 476.4,127.2 468.4,122.2 460.4,114.2 454.4,104.2 451.4,88.1 450.0,70.1 448.8,52.1 448.0,41.0" fill="url(#gh)" /></g>
<polygon points="445.3,40.0 442.3,44.0 439.3,56.1 435.3,72.1 432.3,88.1 430.3,100.2 430.3,114.2 432.3,126.2 438.3,140.3 446.3,150.3 454.4,158.3 466.4,144.3 482.4,129.6 476.4,127.2 468.4,122.2 460.4,114.2 454.4,104.2 451.4,88.1 450.0,70.1 448.8,52.1 448.0,41.0" fill="url(#ghl)" />
<polygon points="579.7,39.6 582.1,41.0 584.7,50.0 588.7,66.1 591.7,82.1 594.1,96.2 594.7,110.2 594.1,122.2 590.7,134.2 584.7,144.3 576.6,152.3 570.6,158.3 558.6,144.3 542.6,129.6 550.6,127.2 560.6,121.2 568.6,112.2 572.6,100.2 574.6,84.1 575.6,66.1 576.2,50.0 576.6,41.0" fill="url(#ghr)" />
<ellipse cx="464.4" cy="143.3" rx="9" ry="6" transform="rotate(-48 464.4 143.3)" fill="#7196da" opacity="0.8" filter="url(#b2)"/>
<ellipse cx="563.6" cy="138.2" rx="10" ry="6" transform="rotate(-55 563.6 138.2)" fill="#7196da" opacity="0.75" filter="url(#b2)"/>
<polygon points="432.3,539.3 430.3,542.3 427.3,560.3 424.3,580.3 423.3,590.0 421.3,607.1 477.4,613.1 479.4,552.7 464.4,548.3 446.3,542.3" fill="url(#gll)" />
<polygon points="592.7,539.3 594.7,542.3 597.7,560.3 600.7,580.3 602.7,590.0 604.7,607.1 547.0,613.1 545.6,552.7 560.6,548.3 578.7,542.3" fill="url(#glr)" />
<polygon points="414.3,686.3 414.3,690.3 412.3,710.3 412.3,710.0 466.4,710.0 466.4,690.0 466.4,710.3 468.4,692.3 474.4,688.3" fill="url(#gsl)" />
<polygon points="610.7,686.3 610.7,694.3 612.7,710.3 612.7,710.0 556.6,710.0 556.6,690.0 557.6,710.3 554.6,692.3 547.6,689.3" fill="url(#gsr)" />
<polygon points="412.3,710.0 402.2,714.1 398.2,722.1 395.2,740.1 390.2,758.2 387.2,764.2 386.2,770.2 387.2,776.2 383.2,794.2 381.2,800.3 382.2,806.3 384.2,808.3 380.2,822.3 374.2,841.3 473.4,841.3 472.4,814.3 475.4,808.3 476.0,800.3 473.4,794.2 472.4,774.2 476.4,770.2 476.4,766.2 472.4,762.2 472.4,722.1 468.4,716.1 466.4,710.0" fill="url(#ggl)" />
<polygon points="612.7,710.0 622.8,714.1 626.8,722.1 630.8,740.1 634.8,758.2 637.8,764.2 638.8,770.2 637.8,776.2 641.8,794.2 643.8,800.3 642.8,806.3 640.8,808.3 644.8,822.3 650.8,841.3 550.6,841.3 551.6,814.3 549.0,808.3 548.6,800.3 550.6,794.2 551.6,774.2 547.6,770.2 547.6,766.2 551.6,762.2 552.6,722.1 556.6,716.1 556.6,710.0" fill="url(#ggr)" />
<path d="M484.1,255.5C489.3,254.4 490.7,256.6 505.7,256.6C520.7,256.6 531.7,254.4 540.4,255.5C549.1,256.6 545.7,258.6 538.2,260.9C530.7,263.2 526.0,264.1 512.2,264.1C498.4,264.1 493.8,263.2 486.3,260.9C478.8,258.6 478.9,256.6 484.1,255.5Z" fill="#427ecc" />
<path d="M455.6,255.2C455.6,256.1 464.5,261.3 476.5,266.4C488.5,271.5 490.7,271.8 500.6,274.4C510.5,277.0 505.8,276.1 513.5,276.0C521.2,275.9 520.1,276.7 529.5,274.1C538.9,271.5 539.4,270.8 548.8,266.4C558.2,262.0 564.9,258.5 564.9,257.6C564.9,256.7 558.2,260.2 548.8,263.2C539.4,266.2 538.9,266.9 529.5,268.8C520.1,270.7 521.2,270.3 513.5,270.4C505.8,270.5 510.5,271.2 500.6,269.3C490.7,267.4 488.5,267.0 476.5,263.2C464.5,259.4 455.6,254.3 455.6,255.2Z" fill="#759bdd" opacity="0.45"/>
<path d="M455.6,255.2C462.6,258.9 461.5,260.0 476.5,266.4C491.5,272.8 488.3,271.2 500.6,274.4C512.9,277.6 503.9,276.1 513.5,276.0C523.1,275.9 517.7,277.3 529.5,274.1C541.3,270.9 537.0,271.9 548.8,266.4C560.6,260.9 559.5,260.5 564.9,257.6" fill="none" stroke="#437dca" stroke-width="1.6" stroke-linecap="round" />
<path d="M455.6,257.1C462.6,260.8 461.5,261.9 476.5,268.3C491.5,274.7 488.3,273.2 500.6,276.4C512.9,279.6 503.9,278.1 513.5,278.0C523.1,277.9 517.7,279.2 529.5,276.0C541.3,272.8 537.0,273.8 548.8,268.3C560.6,262.8 559.5,262.4 564.9,259.5" fill="none" stroke="#749bdd" stroke-width="1.2" stroke-linecap="round" opacity="0.7"/>
<polyline points="360.2,287.3 376.6,305.6 408.3,305.6 443.9,299.5" fill="none" stroke="#417dcb" stroke-width="2.2" stroke-linecap="round" stroke-linejoin="round" />
<polyline points="443.9,229.2 443.9,299.5" fill="none" stroke="#417bc8" stroke-width="1.6" stroke-linecap="round" stroke-linejoin="round" />
<polyline points="664.9,289.3 649.8,305.6 614.7,304.6 580.7,299.5" fill="none" stroke="#3a78c6" stroke-width="2.2" stroke-linecap="round" stroke-linejoin="round" />
<polyline points="580.5,229.2 580.5,299.5" fill="none" stroke="#769adc" stroke-width="1.2" stroke-linecap="round" stroke-linejoin="round" opacity="0.6"/>
<circle cx="428.1" cy="244.6" r="6.8" fill="url(#rv)"/>
<circle cx="371.8" cy="268.0" r="6.8" fill="url(#rv)"/>
<circle cx="432.7" cy="285.6" r="6.8" fill="url(#rv)"/>
<circle cx="594.7" cy="244.2" r="6.8" fill="url(#rv)"/>
<circle cx="652.8" cy="267.3" r="6.8" fill="url(#rv)"/>
<circle cx="590.7" cy="285.3" r="6.8" fill="url(#rv)"/>
<polyline points="416.3,307.0 414.3,322.1 409.3,338.1" fill="none" stroke="#467fcb" stroke-width="1.3" stroke-linecap="round" stroke-linejoin="round" />
<polyline points="398.2,310.0 397.2,336.1" fill="none" stroke="#4c83ce" stroke-width="1.0" stroke-linecap="round" stroke-linejoin="round" opacity="0.6"/>
<polyline points="607.7,307.0 611.7,322.1 614.7,338.1" fill="none" stroke="#407ac5" stroke-width="1.3" stroke-linecap="round" stroke-linejoin="round" />
<polyline points="625.8,309.0 627.8,336.1" fill="none" stroke="#407ac5" stroke-width="1.0" stroke-linecap="round" stroke-linejoin="round" opacity="0.5"/>
<path d="M276.6,305.1C279.3,310.1 281.0,309.7 284.7,320.1C288.4,330.5 287.7,326.8 287.7,336.2C287.7,345.6 285.7,344.2 284.7,348.2" fill="none" stroke="#467fcb" stroke-width="1.3" stroke-linecap="round" />
<path d="M266.6,302.1C269.6,308.1 271.3,307.4 275.6,320.1C279.9,332.8 279.3,326.8 279.6,340.2C279.9,353.6 277.6,353.5 276.6,360.2" fill="none" stroke="#7a9edf" stroke-width="1.2" stroke-linecap="round" opacity="0.35"/>
<path d="M188.4,340.2C194.4,340.2 197.1,336.9 206.5,340.2C215.9,343.5 211.8,342.2 216.5,350.2C221.2,358.2 220.5,356.2 220.5,364.2C220.5,372.2 217.8,370.9 216.5,374.3" fill="none" stroke="#407bc8" stroke-width="1.4" stroke-linecap="round" />
<path d="M195.4,327.2C202.4,328.2 205.5,323.9 216.5,330.2C227.5,336.5 223.2,333.2 228.5,346.2C233.8,359.2 231.2,361.6 232.5,369.3" fill="none" stroke="#7a9edf" stroke-width="1.2" stroke-linecap="round" opacity="0.35"/>
<path d="M750.3,306.1C747.3,310.8 745.3,310.1 741.3,320.1C737.3,330.1 739.3,326.8 738.3,336.2C737.3,345.6 738.3,344.2 738.3,348.2" fill="none" stroke="#407ac5" stroke-width="1.3" stroke-linecap="round" />
<path d="M760.4,301.1C756.7,306.8 754.3,305.7 749.3,318.1C744.3,330.5 745.6,324.8 745.3,338.2C745.0,351.6 747.3,351.5 748.3,358.2" fill="none" stroke="#457eca" stroke-width="1.1" stroke-linecap="round" opacity="0.7"/>
<polygon points="812.5,329.2 826.5,326.6 834.5,332.2 837.5,340.2 812.5,344.2 804.5,354.2 808.5,373.3 796.5,371.3 793.4,354.2 800.5,338.2" fill="#457fcc" opacity="0.8"/>
<path d="M430.3,433.3C435.0,432.6 434.3,433.3 444.3,431.3C454.3,429.3 450.4,431.0 460.4,427.3C470.4,423.6 464.4,424.3 474.4,420.3C484.4,416.3 480.5,417.6 490.5,415.3C500.5,413.0 494.5,413.8 504.5,413.3C514.5,412.8 508.5,412.2 520.5,413.9C532.5,415.6 527.2,414.2 540.6,418.3C554.0,422.4 549.3,421.3 560.6,426.3C571.9,431.3 566.9,429.0 574.6,433.3C582.3,437.6 580.7,437.3 583.7,439.3" fill="none" stroke="#437dca" stroke-width="1.6" stroke-linecap="round" />
<path d="M430.3,434.90000000000003C435.0,434.2 434.3,434.9 444.3,432.90000000000003C454.3,430.9 450.4,432.6 460.4,428.90000000000003C470.4,425.2 464.4,425.9 474.4,421.90000000000003C484.4,417.9 480.5,419.2 490.5,416.90000000000003C500.5,414.6 494.5,415.4 504.5,414.90000000000003C514.5,414.4 508.5,413.8 520.5,415.5C532.5,417.2 527.2,415.8 540.6,419.90000000000003C554.0,424.0 549.3,422.9 560.6,427.90000000000003C571.9,432.9 566.9,430.6 574.6,434.90000000000003C582.3,439.2 580.7,438.9 583.7,440.90000000000003" fill="none" stroke="#759bdd" stroke-width="1.2" stroke-linecap="round" opacity="0.6"/>
<polygon points="487.6,310.7 536.0,310.7 543.8,344.3 481.5,344.3" fill="#5889d2" opacity="0.5"/>
<polyline points="481.5,344.7 496.2,344.7" fill="none" stroke="#427bc6" stroke-width="1.2" stroke-linecap="round" stroke-linejoin="round" />
<polyline points="529.4,344.7 543.8,344.7" fill="none" stroke="#427bc6" stroke-width="1.2" stroke-linecap="round" stroke-linejoin="round" />
<polyline points="536.0,310.7 543.8,344.3" fill="none" stroke="#467fcb" stroke-width="1.2" stroke-linecap="round" stroke-linejoin="round" />
<polygon points="495.4,344.3 529.8,344.3 529.0,349.2 526.6,364.8 520.8,356.6 515.9,366.4 511.0,355.7 506.9,365.6 501.1,352.5 497.0,363.9" fill="#4680cd" opacity="0.7"/>
<polyline points="504.4,336.1 493.8,328.3 491.3,337.7" fill="none" stroke="#3972bc" stroke-width="1.3" stroke-linecap="round" stroke-linejoin="round" />
<polyline points="519.2,336.1 525.7,330.3 530.7,328.3" fill="none" stroke="#3972bc" stroke-width="1.3" stroke-linecap="round" stroke-linejoin="round" />
<polyline points="506.1,348.4 511.8,341.0 515.9,348.4" fill="none" stroke="#3972bc" stroke-width="1.3" stroke-linecap="round" stroke-linejoin="round" />
<polyline points="508.5,350.0 512.6,344.3" fill="none" stroke="#3972bc" stroke-width="1.0" stroke-linecap="round" stroke-linejoin="round" />
<polygon points="432.3,475.1 446.3,479.1 460.4,482.5 474.4,485.1 473.4,505.8 460.4,503.6 446.3,500.6 431.3,497.2" fill="#6893d9" />
<polygon points="592.7,475.1 578.7,479.1 564.6,482.5 550.6,485.1 551.6,505.8 564.6,503.6 578.7,500.6 592.7,497.2" fill="#5588d2" />
<path d="M432.3,475.1C437.0,476.4 436.9,476.6 446.3,479.1C455.7,481.6 451.0,480.5 460.4,482.5C469.8,484.5 469.7,484.2 474.4,485.1" fill="none" stroke="#437dca" stroke-width="1.4" stroke-linecap="round" />
<path d="M431.3,497.2C436.3,498.3 436.6,498.5 446.3,500.6C456.0,502.7 451.4,501.9 460.4,503.6C469.4,505.3 469.1,505.1 473.4,505.8" fill="none" stroke="#407ac8" stroke-width="1.8" stroke-linecap="round" />
<path d="M592.7,475.1C588.0,476.4 588.1,476.6 578.7,479.1C569.3,481.6 574.0,480.5 564.6,482.5C555.2,484.5 555.3,484.2 550.6,485.1" fill="none" stroke="#407ac8" stroke-width="1.4" stroke-linecap="round" />
<path d="M592.7,497.2C588.0,498.3 588.1,498.5 578.7,500.6C569.3,502.7 573.6,501.9 564.6,503.6C555.6,505.3 555.9,505.1 551.6,505.8" fill="none" stroke="#3976c3" stroke-width="1.8" stroke-linecap="round" />
<path d="M432.3,539.3C437.0,540.3 435.6,539.3 446.3,542.3C457.0,545.3 453.4,544.8 464.4,548.3C475.4,551.8 474.4,551.2 479.4,552.7" fill="none" stroke="#437dca" stroke-width="1.6" stroke-linecap="round" />
<path d="M592.7,539.3C588.0,540.3 589.4,539.3 578.7,542.3C568.0,545.3 571.6,544.8 560.6,548.3C549.6,551.8 550.6,551.2 545.6,552.7" fill="none" stroke="#3d79c6" stroke-width="1.6" stroke-linecap="round" />
<rect x="478.8" y="505.0" width="67.0" height="194.3" rx="3" fill="url(#gl)"/>
<line x1="545.8" y1="515.0" x2="545.8" y2="697.3" stroke="#3c78c4" stroke-width="1.4"/>
<line x1="478.8" y1="515.0" x2="478.8" y2="697.3" stroke="#4c83ce" stroke-width="1"/>
<circle cx="514.1" cy="499.2" r="35" fill="#5488d2"/>
<circle cx="512.6" cy="497.7" r="32.5" fill="#6792d9"/>
<circle cx="512.1" cy="498.2" r="30" fill="#628fd7" stroke="#437dca" stroke-width="1.3"/>
<polygon points="412.3,609.1 434.3,608.1 454.4,610.1 477.4,613.1 477.4,689.3 454.4,687.3 434.3,687.3 414.3,686.3 409.3,682.3 407.3,670.2 407.3,650.2 409.3,622.1" fill="url(#gtl)" />
<polygon points="613.7,609.1 590.7,608.1 570.6,610.1 547.0,613.1 547.0,689.3 570.6,687.3 590.7,687.3 610.7,686.3 616.7,682.3 617.7,670.2 617.7,650.2 615.7,622.1" fill="url(#gtr)" />
<path d="M421.3,607.5C429.6,608.0 427.6,607.2 446.3,609.1C465.0,611.0 467.0,611.8 477.4,613.1" fill="none" stroke="#467fcb" stroke-width="1.3" stroke-linecap="round" />
<path d="M604.7,607.5C596.0,608.0 597.9,607.2 578.7,609.1C559.5,611.0 557.6,611.8 547.0,613.1" fill="none" stroke="#407ac8" stroke-width="1.3" stroke-linecap="round" />
<path d="M414.3,686.7C425.0,687.2 426.3,687.6 446.3,688.3C466.3,689.0 465.0,688.6 474.4,688.7" fill="none" stroke="#407ac8" stroke-width="1.6" stroke-linecap="round" />
<path d="M610.7,686.7C600.0,687.2 599.7,687.4 578.7,688.3C557.7,689.2 558.0,689.1 547.6,689.5" fill="none" stroke="#3a77c4" stroke-width="1.6" stroke-linecap="round" />
<circle cx="414.3" cy="623.1" r="4" fill="url(#rv)"/>
<circle cx="434.3" cy="624.1" r="4" fill="url(#rv)"/>
<circle cx="462.4" cy="627.1" r="4" fill="url(#rv)"/>
<circle cx="409.3" cy="668.2" r="4" fill="url(#rv)"/>
<circle cx="425.3" cy="673.2" r="4" fill="url(#rv)"/>
<circle cx="452.4" cy="677.2" r="4" fill="url(#rv)"/>
<circle cx="474.4" cy="677.2" r="4" fill="url(#rv)"/>
<circle cx="560.6" cy="628.1" r="4" fill="url(#rv)"/>
<circle cx="589.7" cy="623.1" r="4" fill="url(#rv)"/>
<circle cx="610.7" cy="620.1" r="4" fill="url(#rv)"/>
<circle cx="548.6" cy="675.2" r="4" fill="url(#rv)"/>
<circle cx="570.6" cy="677.2" r="4" fill="url(#rv)"/>
<circle cx="597.7" cy="673.2" r="4" fill="url(#rv)"/>
<circle cx="614.7" cy="667.2" r="4" fill="url(#rv)"/>
<path d="M412.3,710.0C419.6,709.7 416.3,709.0 434.3,709.0C452.3,709.0 455.7,709.7 466.4,710.0" fill="none" stroke="#467fcb" stroke-width="1.3" stroke-linecap="round" />
<path d="M556.6,710.0C566.0,709.7 566.0,709.0 584.7,709.0C603.4,709.0 603.4,709.7 612.7,710.0" fill="none" stroke="#407ac8" stroke-width="1.3" stroke-linecap="round" />
<circle cx="402.2" cy="736.1" r="4.5" fill="url(#rv)"/>
<circle cx="426.3" cy="741.7" r="4.5" fill="url(#rv)"/>
<circle cx="455.4" cy="734.1" r="4.5" fill="url(#rv)"/>
<circle cx="567.6" cy="734.1" r="4.5" fill="url(#rv)"/>
<circle cx="596.7" cy="741.7" r="4.5" fill="url(#rv)"/>
<circle cx="621.8" cy="735.1" r="4.5" fill="url(#rv)"/>
<path d="M388.2,794.2C391.5,788.9 389.5,787.2 398.2,778.2C406.9,769.2 402.3,771.9 414.3,767.2C426.3,762.5 422.3,763.9 434.3,764.2C446.3,764.5 440.4,762.9 450.4,768.2C460.4,773.5 456.7,770.9 464.4,780.2C472.1,789.5 470.4,790.9 473.4,796.2" fill="none" stroke="#407ac8" stroke-width="2.0" stroke-linecap="round" />
<path d="M551.6,796.2C554.6,790.9 552.9,789.5 560.6,780.2C568.3,770.9 564.6,773.5 574.6,768.2C584.6,762.9 579.3,764.5 590.7,764.2C602.1,763.9 597.3,762.5 608.7,767.2C620.1,771.9 615.4,769.2 624.8,778.2C634.2,787.2 632.8,788.9 636.8,794.2" fill="none" stroke="#3a77c4" stroke-width="2.0" stroke-linecap="round" />
<polygon points="416.7,800.3 419.5,802.7 414.7,841.3 406.3,841.3" fill="#3373c6" />
<polygon points="602.1,800.3 605.1,803.3 607.1,841.3 600.1,841.3" fill="#3272c5" />
<rect x="506.4" y="121.5" width="12.3" height="39" fill="#6b95d9"/>
<line x1="518.7" y1="124" x2="518.7" y2="160.5" stroke="#326db8" stroke-width="1.3"/>
<line x1="506.4" y1="124" x2="506.4" y2="160.5" stroke="#477fcb" stroke-width="1"/>
<polygon points="478.2,178.9 545.8,178.9 542.5,187.3 536.0,190.0 529.6,188.9 524.1,186.2 517.7,185.1 517.7,255.5 506.3,255.5 506.3,185.1 499.3,186.2 494.9,188.9 486.3,190.0 480.9,187.3" fill="#5f8ed5" />
<polyline points="477.1,178.2 545.2,178.2" fill="none" stroke="#427bc6" stroke-width="1.3" stroke-linecap="round" stroke-linejoin="round" />
<polyline points="478.2,179.2 480.9,187.3 486.3,190.0 494.9,188.9 499.3,186.2 506.3,185.1 506.3,255.5" fill="none" stroke="#457eca" stroke-width="1.2" stroke-linecap="round" stroke-linejoin="round" />
<polyline points="546.3,179.2 542.5,187.3 536.0,190.0 529.6,188.9 524.1,186.2 517.7,185.1 517.7,255.5" fill="none" stroke="#3c76c1" stroke-width="1.2" stroke-linecap="round" stroke-linejoin="round" />
<circle cx="512.3" cy="157.8" r="2.9" fill="#f0a93a" stroke="#1d2535" stroke-width="1"/>
</g>
<g id="rightfig">
<g stroke="#1f4079" stroke-width="1.8" stroke-linejoin="round"><polygon points="1533.4,125.2 1528.4,126.6 1520.4,132.2 1510.4,142.3 1503.4,152.3 1499.4,158.3 1500.4,162.3 1498.4,170.3 1498.4,178.3 1496.4,179.3 1496.4,185.4 1499.4,186.4 1497.4,200.1 1496.4,220.2 1496.8,240.2 1498.4,254.2 1494.4,262.3 1486.3,272.3 1480.3,278.3 1476.3,282.3 1473.9,288.3 1474.3,294.3 1478.3,299.3 1479.3,305.4 1474.3,310.4 1472.3,318.4 1472.4,320.1 1460.4,325.1 1452.3,331.1 1447.3,339.1 1447.3,345.1 1440.3,350.1 1420.3,359.2 1400.2,369.2 1380.2,374.9 1372.7,378.3 1357.6,386.5 1344.1,394.1 1333.6,403.8 1323.8,415.1 1314.8,426.4 1313.9,428.3 1316.3,429.2 1323.8,421.1 1335.1,409.8 1344.1,402.3 1353.1,397.8 1350.1,400.8 1342.6,410.6 1336.6,418.9 1332.2,424.5 1332.7,426.1 1335.1,425.8 1341.1,418.1 1350.1,407.6 1359.1,400.1 1365.2,396.3 1372.7,394.1 1374.9,394.4 1370.4,401.6 1365.2,409.1 1359.9,416.6 1357.9,421.1 1359.0,422.8 1362.1,423.8 1368.9,420.4 1380.2,413.6 1391.5,405.3 1402.7,397.1 1414.0,388.8 1425.3,379.8 1432.8,375.3 1448.3,372.2 1460.4,371.2 1466.4,373.2 1474.4,374.2 1480.4,376.2 1481.4,390.2 1481.4,414.3 1490.4,422.3 1492.4,430.3 1495.4,446.4 1497.5,460.4 1497.4,460.1 1490.3,459.1 1482.3,463.1 1483.3,470.1 1488.3,482.1 1491.3,496.2 1492.3,510.2 1491.3,526.2 1493.4,531.2 1496.4,533.2 1496.0,698.3 1497.0,700.9 1500.0,700.9 1501.0,698.3 1501.0,534.2 1504.8,530.2 1506.4,524.2 1510.4,536.2 1514.4,548.3 1512.4,570.3 1510.4,590.4 1510.4,570.0 1509.4,586.0 1507.4,606.1 1494.4,607.1 1491.3,611.1 1493.4,622.1 1496.4,636.2 1500.4,646.2 1506.4,658.2 1514.4,670.2 1522.4,679.3 1532.4,688.3 1540.5,690.3 1544.5,694.3 1548.5,704.3 1549.5,712.3 1538.5,711.3 1532.4,722.1 1524.4,737.1 1520.4,740.1 1520.4,748.1 1516.4,760.2 1516.4,766.2 1520.4,769.2 1522.4,774.2 1512.4,784.2 1500.4,798.2 1492.3,810.3 1488.3,822.3 1483.3,841.3 1581.6,841.3 1578.5,826.3 1574.5,810.3 1578.5,800.3 1584.6,784.2 1589.6,774.2 1594.6,770.2 1594.6,764.2 1592.6,760.2 1598.6,746.1 1602.6,736.1 1601.6,733.1 1593.6,729.1 1596.6,722.1 1602.6,710.0 1603.6,702.0 1600.6,694.0 1597.6,690.0 1595.6,688.3 1594.6,683.3 1601.6,681.3 1600.6,678.2 1594.6,668.2 1590.6,660.2 1582.6,654.2 1574.5,646.2 1569.5,636.2 1568.5,624.1 1570.5,610.1 1576.5,600.1 1584.6,586.0 1590.6,570.0 1588.6,574.3 1591.6,560.3 1600.6,554.3 1610.6,541.3 1620.1,558.2 1640.2,586.2 1660.2,612.3 1680.3,632.3 1700.3,650.4 1730.0,669.1 1750.0,678.1 1770.1,690.2 1790.1,700.2 1810.2,709.2 1830.2,717.2 1850.3,723.2 1870.3,728.2 1890.4,732.3 1910.4,736.3 1930.5,738.9 1950.5,740.9 1970.6,742.3 1990.6,743.3 2010.6,743.3 2030.7,743.3 2050.7,742.9 2070.8,742.7 2080.8,742.3 2084.8,740.3 2085.8,736.3 2083.8,731.3 2080.8,729.9 2070.8,729.9 2050.7,729.5 2030.7,728.8 2010.6,727.8 1990.6,726.2 1970.6,723.8 1950.5,721.2 1930.5,718.2 1910.4,714.2 1890.4,709.2 1870.3,703.2 1850.3,696.2 1830.2,688.2 1810.2,679.1 1790.1,668.1 1770.1,656.1 1750.0,642.1 1730.0,626.0 1720.4,614.3 1700.3,592.3 1680.3,568.2 1660.2,544.1 1640.2,520.1 1629.2,508.1 1627.2,500.0 1624.1,488.0 1627.7,484.1 1626.7,476.1 1623.7,465.1 1617.6,464.1 1618.6,450.0 1619.6,430.0 1620.7,420.3 1621.7,408.3 1632.8,405.3 1637.8,402.3 1636.8,370.2 1636.8,330.1 1634.8,314.1 1633.8,302.0 1640.8,300.0 1640.8,290.0 1639.7,284.3 1634.7,280.3 1628.7,274.3 1620.6,260.3 1614.6,252.2 1610.6,246.2 1608.6,240.2 1612.6,234.2 1617.6,220.2 1620.2,200.1 1619.6,180.1 1616.6,162.0 1608.6,150.0 1602.6,142.3 1592.6,134.2 1580.6,126.2 1565.5,124.2" fill="url(#gr)" />
<polygon points="1533.4,126.2 1531.4,104.2 1528.4,82.1 1525.4,60.1 1524.4,42.0 1526.4,40.0 1529.4,42.0 1538.5,62.1 1548.5,86.1 1557.5,108.2 1562.5,120.2 1566.5,130.2" fill="url(#grh)" /></g>
<g id="Rsil"><polygon points="1533.4,125.2 1528.4,126.6 1520.4,132.2 1510.4,142.3 1503.4,152.3 1499.4,158.3 1500.4,162.3 1498.4,170.3 1498.4,178.3 1496.4,179.3 1496.4,185.4 1499.4,186.4 1497.4,200.1 1496.4,220.2 1496.8,240.2 1498.4,254.2 1494.4,262.3 1486.3,272.3 1480.3,278.3 1476.3,282.3 1473.9,288.3 1474.3,294.3 1478.3,299.3 1479.3,305.4 1474.3,310.4 1472.3,318.4 1472.4,320.1 1460.4,325.1 1452.3,331.1 1447.3,339.1 1447.3,345.1 1440.3,350.1 1420.3,359.2 1400.2,369.2 1380.2,374.9 1372.7,378.3 1357.6,386.5 1344.1,394.1 1333.6,403.8 1323.8,415.1 1314.8,426.4 1313.9,428.3 1316.3,429.2 1323.8,421.1 1335.1,409.8 1344.1,402.3 1353.1,397.8 1350.1,400.8 1342.6,410.6 1336.6,418.9 1332.2,424.5 1332.7,426.1 1335.1,425.8 1341.1,418.1 1350.1,407.6 1359.1,400.1 1365.2,396.3 1372.7,394.1 1374.9,394.4 1370.4,401.6 1365.2,409.1 1359.9,416.6 1357.9,421.1 1359.0,422.8 1362.1,423.8 1368.9,420.4 1380.2,413.6 1391.5,405.3 1402.7,397.1 1414.0,388.8 1425.3,379.8 1432.8,375.3 1448.3,372.2 1460.4,371.2 1466.4,373.2 1474.4,374.2 1480.4,376.2 1481.4,390.2 1481.4,414.3 1490.4,422.3 1492.4,430.3 1495.4,446.4 1497.5,460.4 1497.4,460.1 1490.3,459.1 1482.3,463.1 1483.3,470.1 1488.3,482.1 1491.3,496.2 1492.3,510.2 1491.3,526.2 1493.4,531.2 1496.4,533.2 1496.0,698.3 1497.0,700.9 1500.0,700.9 1501.0,698.3 1501.0,534.2 1504.8,530.2 1506.4,524.2 1510.4,536.2 1514.4,548.3 1512.4,570.3 1510.4,590.4 1510.4,570.0 1509.4,586.0 1507.4,606.1 1494.4,607.1 1491.3,611.1 1493.4,622.1 1496.4,636.2 1500.4,646.2 1506.4,658.2 1514.4,670.2 1522.4,679.3 1532.4,688.3 1540.5,690.3 1544.5,694.3 1548.5,704.3 1549.5,712.3 1538.5,711.3 1532.4,722.1 1524.4,737.1 1520.4,740.1 1520.4,748.1 1516.4,760.2 1516.4,766.2 1520.4,769.2 1522.4,774.2 1512.4,784.2 1500.4,798.2 1492.3,810.3 1488.3,822.3 1483.3,841.3 1581.6,841.3 1578.5,826.3 1574.5,810.3 1578.5,800.3 1584.6,784.2 1589.6,774.2 1594.6,770.2 1594.6,764.2 1592.6,760.2 1598.6,746.1 1602.6,736.1 1601.6,733.1 1593.6,729.1 1596.6,722.1 1602.6,710.0 1603.6,702.0 1600.6,694.0 1597.6,690.0 1595.6,688.3 1594.6,683.3 1601.6,681.3 1600.6,678.2 1594.6,668.2 1590.6,660.2 1582.6,654.2 1574.5,646.2 1569.5,636.2 1568.5,624.1 1570.5,610.1 1576.5,600.1 1584.6,586.0 1590.6,570.0 1588.6,574.3 1591.6,560.3 1600.6,554.3 1610.6,541.3 1620.1,558.2 1640.2,586.2 1660.2,612.3 1680.3,632.3 1700.3,650.4 1730.0,669.1 1750.0,678.1 1770.1,690.2 1790.1,700.2 1810.2,709.2 1830.2,717.2 1850.3,723.2 1870.3,728.2 1890.4,732.3 1910.4,736.3 1930.5,738.9 1950.5,740.9 1970.6,742.3 1990.6,743.3 2010.6,743.3 2030.7,743.3 2050.7,742.9 2070.8,742.7 2080.8,742.3 2084.8,740.3 2085.8,736.3 2083.8,731.3 2080.8,729.9 2070.8,729.9 2050.7,729.5 2030.7,728.8 2010.6,727.8 1990.6,726.2 1970.6,723.8 1950.5,721.2 1930.5,718.2 1910.4,714.2 1890.4,709.2 1870.3,703.2 1850.3,696.2 1830.2,688.2 1810.2,679.1 1790.1,668.1 1770.1,656.1 1750.0,642.1 1730.0,626.0 1720.4,614.3 1700.3,592.3 1680.3,568.2 1660.2,544.1 1640.2,520.1 1629.2,508.1 1627.2,500.0 1624.1,488.0 1627.7,484.1 1626.7,476.1 1623.7,465.1 1617.6,464.1 1618.6,450.0 1619.6,430.0 1620.7,420.3 1621.7,408.3 1632.8,405.3 1637.8,402.3 1636.8,370.2 1636.8,330.1 1634.8,314.1 1633.8,302.0 1640.8,300.0 1640.8,290.0 1639.7,284.3 1634.7,280.3 1628.7,274.3 1620.6,260.3 1614.6,252.2 1610.6,246.2 1608.6,240.2 1612.6,234.2 1617.6,220.2 1620.2,200.1 1619.6,180.1 1616.6,162.0 1608.6,150.0 1602.6,142.3 1592.6,134.2 1580.6,126.2 1565.5,124.2" fill="url(#gr)" />
<polygon points="1533.4,126.2 1531.4,104.2 1528.4,82.1 1525.4,60.1 1524.4,42.0 1526.4,40.0 1529.4,42.0 1538.5,62.1 1548.5,86.1 1557.5,108.2 1562.5,120.2 1566.5,130.2" fill="url(#grh)" /></g>
<g clip-path="url(#cRb)"><ellipse cx="1532.2" cy="183.5" rx="26" ry="48" fill="#6f98db" opacity="0.55" filter="url(#b6)"/>
<polygon points="1573.2,123.7 1627.9,123.7 1627.9,246.7 1604.0,246.7 1609.1,212.5 1609.1,178.3 1598.9,152.7 1583.5,135.6" fill="#3c7bcb" opacity="0.55" filter="url(#b6)"/>
<path d="M1535.7,126.2C1540.2,125.5 1539.1,124.8 1549.3,124.0C1559.5,123.2 1556.1,123.2 1566.4,123.7C1576.7,124.2 1571.0,122.3 1580.1,125.4C1589.2,128.5 1585.7,127.4 1593.7,133.1C1601.7,138.8 1597.7,134.8 1604.0,142.5C1610.3,150.2 1607.9,147.6 1612.5,156.1C1617.1,164.6 1615.3,156.7 1617.7,168.1C1620.1,179.5 1619.7,175.5 1619.7,190.3C1619.7,205.1 1620.7,196.0 1617.7,212.5C1614.7,229.0 1613.1,230.7 1610.8,239.8" fill="none" stroke="#6c96da" stroke-width="6.6" stroke-linecap="round" />
<path d="M1499.8,157.8C1502.6,153.3 1501.5,152.2 1508.3,144.2C1515.1,136.2 1511.7,139.7 1520.3,133.9C1528.9,128.1 1529.4,129.1 1534.0,126.7" fill="none" stroke="#6c96da" stroke-width="5.5" stroke-linecap="round" />
<ellipse cx="1557.9" cy="146.7" rx="15" ry="9" fill="#407bca" opacity="0.8" filter="url(#b2)"/>
<polygon points="1533.4,126.2 1531.4,104.2 1528.4,82.1 1525.4,60.1 1524.4,42.0 1526.4,40.0 1529.4,42.0 1538.5,62.1 1548.5,86.1 1557.5,108.2 1562.5,120.2 1566.5,130.2 1560.5,142.3 1544.5,146.3 1535.4,138.2" fill="url(#grh)" />
<path d="M1496.4,256.9C1499.2,252.9 1498.1,251.8 1504.9,245.0C1511.7,238.2 1506.6,241.5 1516.9,236.4C1527.2,231.3 1524.3,233.0 1535.7,229.6C1547.1,226.2 1540.8,226.8 1551.0,226.2C1561.2,225.6 1554.4,225.1 1566.4,227.9C1578.4,230.7 1574.4,229.0 1586.9,234.7C1599.4,240.4 1595.5,238.7 1604.0,245.0C1612.5,251.3 1609.7,250.7 1612.5,253.5" fill="none" stroke="#437ecb" stroke-width="1.6" stroke-linecap="round" />
<path d="M1481.0,303.5C1484.4,297.8 1482.1,295.5 1491.2,286.4C1500.3,277.3 1495.8,281.2 1508.3,276.1C1520.8,271.0 1514.0,273.6 1528.8,271.0C1543.6,268.4 1536.7,268.4 1552.7,268.4C1568.7,268.4 1561.3,267.3 1576.7,271.0C1592.1,274.7 1584.7,271.5 1598.9,279.5C1613.1,287.5 1608.6,284.6 1619.4,294.9C1630.2,305.2 1627.3,305.2 1631.3,310.3" fill="none" stroke="#4680cd" stroke-width="1.4" stroke-linecap="round" opacity="0.8"/>
<polygon points="1520.3,286.4 1542.5,279.5 1569.8,281.2 1585.2,303.5 1576.7,332.5 1559.6,347.9 1542.5,339.3 1535.7,312.0" fill="#417dcc" filter="url(#b2)"/>
<polygon points="1576.7,281.2 1597.2,292.4 1612.5,306.9 1598.0,343.6 1559.6,358.5 1543.3,356.4 1549.3,347.9 1559.6,352.1 1592.9,339.3 1605.7,308.9 1595.4,297.5" fill="#7a9ee0" />
<polygon points="1576.7,281.2 1585.2,303.5 1576.7,332.5 1559.6,347.9 1549.3,347.9 1559.6,352.1 1592.9,339.3 1598.9,310.3 1595.4,297.5" fill="#598bd4" />
<polygon points="1612.5,306.9 1645.0,298.3 1645.0,380.0 1559.6,380.0 1559.6,358.5 1598.0,343.6" fill="#3c7bcb" opacity="0.35" filter="url(#b6)"/>
<polygon points="1500.5,308.0 1526.5,302.0 1540.6,318.1 1542.6,342.1 1534.5,358.2 1512.5,364.2 1488.4,370.2 1466.4,373.2 1460.4,371.2 1448.3,372.2 1432.8,375.3 1425.3,379.8 1414.0,388.8 1402.7,397.1 1391.5,405.3 1380.2,413.6 1368.9,420.4 1362.1,423.8 1359.0,422.8 1357.9,421.1 1359.9,416.6 1365.2,409.1 1370.4,401.6 1374.9,394.4 1372.7,394.1 1365.2,396.3 1359.1,400.1 1350.1,407.6 1341.1,418.1 1335.1,425.8 1332.7,426.1 1332.2,424.5 1336.6,418.9 1342.6,410.6 1350.1,400.8 1353.1,397.8 1344.1,402.3 1335.1,409.8 1323.8,421.1 1316.3,429.2 1313.9,428.3 1314.8,426.4 1323.8,415.1 1333.6,403.8 1344.1,394.1 1357.6,386.5 1372.7,378.3 1380.2,374.9 1400.2,369.2 1420.3,359.2 1440.3,350.1 1447.3,345.1 1447.3,339.1 1452.3,331.1 1460.4,325.1 1472.4,320.1" fill="url(#gra)" />
<polyline points="1390.0,391.4 1380.2,400.1 1371.2,408.3" fill="none" stroke="#2f5fa8" stroke-width="1.1" stroke-linecap="round" stroke-linejoin="round" />
<path d="M1500.5,308.0C1509.2,306.0 1513.1,298.6 1526.5,302.0C1539.9,305.4 1534.9,304.7 1540.6,318.1C1546.3,331.5 1545.6,328.7 1543.6,342.1C1541.6,355.5 1537.5,352.8 1534.5,358.2" fill="none" stroke="#7da0e1" stroke-width="3.6" stroke-linecap="round" opacity="0.75"/>
<path d="M1534.5,358.2C1527.2,360.2 1527.9,360.2 1512.5,364.2C1497.1,368.2 1496.4,368.2 1488.4,370.2" fill="none" stroke="#407bca" stroke-width="1.4" stroke-linecap="round" />
<path d="M1452.3,331.1C1459.0,333.4 1461.7,331.8 1472.4,338.1C1483.1,344.4 1479.7,342.1 1484.4,350.1C1489.1,358.1 1487.7,354.8 1486.4,362.2C1485.1,369.6 1482.4,368.9 1480.4,372.2" fill="none" stroke="#779ddf" stroke-width="3.4" stroke-linecap="round" opacity="0.7"/>
<path d="M1447.3,345.1C1453.7,343.4 1455.4,340.4 1466.4,340.1C1477.4,339.8 1474.4,339.4 1480.4,344.1C1486.4,348.8 1485.7,346.7 1484.4,354.1C1483.1,361.5 1479.1,362.2 1476.4,366.2" fill="none" stroke="#437ecb" stroke-width="1.2" stroke-linecap="round" opacity="0.8"/>
<circle cx="1510.9" cy="243.7" r="5" fill="url(#rv)"/>
<circle cx="1511.7" cy="269.3" r="5" fill="url(#rv)"/>
<circle cx="1553.6" cy="255.6" r="5" fill="url(#rv)"/>
<circle cx="1600.6" cy="266.7" r="5" fill="url(#rv)"/>
<circle cx="1635.6" cy="285.5" r="5" fill="url(#rv)"/>
<circle cx="1477.6" cy="284.7" r="5" fill="url(#rv)"/>
<path d="M1482.7,414.4C1491.2,419.5 1491.2,423.2 1508.3,429.8C1525.4,436.4 1516.9,433.0 1534.0,434.1C1551.1,435.2 1542.5,436.9 1559.6,433.2C1576.7,429.5 1568.1,430.4 1585.2,423.0C1602.3,415.6 1598.3,416.4 1610.8,411.0C1623.3,405.6 1618.8,408.1 1622.8,406.7" fill="none" stroke="#427dcb" stroke-width="1.6" stroke-linecap="round" />
<path d="M1482.7,415.9C1491.2,421.0 1491.2,424.7 1508.3,431.3C1525.4,437.9 1516.9,434.5 1534.0,435.6C1551.1,436.7 1542.5,438.4 1559.6,434.7C1576.7,431.0 1568.1,431.9 1585.2,424.5C1602.3,417.1 1598.3,417.9 1610.8,412.5C1623.3,407.1 1618.8,409.6 1622.8,408.2" fill="none" stroke="#749bdd" stroke-width="1.1" stroke-linecap="round" opacity="0.6"/>
<path d="M1499.8,481.9C1519.7,478.8 1520.3,478.2 1559.6,472.5C1598.9,466.8 1598.3,467.4 1617.7,464.8" fill="none" stroke="#437ecb" stroke-width="1.4" stroke-linecap="round" />
<path d="M1503.2,503.2C1522.0,500.4 1519.2,501.5 1559.6,494.7C1600.0,487.9 1602.9,486.7 1624.5,482.7" fill="none" stroke="#3a77c4" stroke-width="2" stroke-linecap="round" />
<polygon points="1481.9,463.2 1492.8,458.4 1497.6,471.4 1501.0,485.1 1503.0,502.9 1503.7,522.0 1504.4,535.7 1501.0,536.3 1492.8,532.9 1492.1,516.5 1490.7,498.8 1487.3,481.0" fill="#6893d9" />
<polyline points="1492.8,458.4 1497.6,471.4 1501.0,485.1 1503.0,502.9 1503.7,522.0 1504.4,535.7" fill="none" stroke="#407ac8" stroke-width="1.3" stroke-linecap="round" stroke-linejoin="round" />
<path d="M1513.5,542.7C1520.9,542.1 1520.3,541.9 1535.7,541.0C1551.1,540.1 1543.1,539.0 1559.6,540.1C1576.1,541.2 1570.4,540.7 1585.2,544.4C1600.0,548.1 1597.7,548.9 1604.0,551.2" fill="none" stroke="#437ecb" stroke-width="1.4" stroke-linecap="round" />
<polygon points="1513.5,542.7 1535.7,541 1559.6,540.1 1585.2,544.4 1604,551.2 1610.6,541.2 1600.6,554.3 1591.6,560.3 1588.6,574.3 1584.5,586 1576.5,600.1 1570.5,610.1 1568.5,624.1 1569.5,636.1 1574.5,646.2 1582.5,654.2 1590.6,660.2 1550,665 1507.4,606.1 1509.4,586 1512.4,570.3 1514.4,548.3" fill="url(#grt)" />
<polygon points="1540.5,690.3 1566.5,679.3 1594.6,683.3 1595.6,688.3 1600.6,696.3 1603.6,704.3 1602.6,714.3 1602.6,710.0 1596.6,722.1 1593.6,729.1 1560.5,717.1 1538.5,711.0 1550.1,712.1 1549.5,712.3 1548.5,704.3 1544.5,694.3" fill="url(#grg)" />
<polygon points="1522.4,774.2 1512.4,784.2 1500.4,798.2 1492.3,810.3 1488.3,822.3 1483.3,841.3 1581.6,841.3 1578.5,826.3 1574.5,810.3 1578.5,800.3 1566.5,805.3 1552.5,807.3 1540.5,803.3 1532.4,794.2 1526.4,780.2" fill="url(#grf)" />
<polygon points="1629.2,508.1 1660.2,544.1 1700.3,592.3 1730.0,626.0 1770.1,656.1 1810.2,679.1 1850.3,696.2 1890.4,709.2 1930.5,718.2 1970.6,723.8 2010.6,727.8 2050.7,729.5 2080.8,729.9 2080.8,742.3 2050.7,742.9 2010.6,743.3 1970.6,742.3 1930.5,738.9 1890.4,732.3 1850.3,723.2 1810.2,709.2 1770.1,690.2 1730.0,669.1 1680.3,632.3 1640.2,586.2 1609.1,541.1" fill="#5586cc" />
<path d="M1624.8,515.4C1635.1,522.2 1636.8,530.5 1655.8,553.4C1674.8,576.3 1676.1,579.2 1695.9,601.1C1715.7,623.0 1710.2,618.8 1730.0,635.5C1749.8,652.2 1748.7,650.2 1770.1,663.6C1791.5,677.0 1788.8,675.4 1810.2,685.7C1831.6,696.0 1828.9,694.5 1850.3,702.1C1871.7,709.7 1869.0,708.8 1890.4,714.3C1911.8,719.8 1909.1,719.2 1930.5,722.8C1951.9,726.4 1949.2,725.7 1970.6,727.9C1992.0,730.1 1989.2,730.0 2010.6,731.2C2032.0,732.4 2032.0,732.0 2050.7,732.4C2069.4,732.8 2072.8,731.3 2080.8,732.6C2088.8,733.9 2088.8,736.0 2080.8,737.3C2072.8,738.6 2069.4,737.6 2050.7,737.5C2032.0,737.4 2032.0,737.8 2010.6,737.1C1989.2,736.4 1992.0,736.6 1970.6,734.9C1949.2,733.2 1951.9,733.7 1930.5,730.6C1909.1,727.5 1911.8,728.0 1890.4,723.1C1869.0,718.2 1871.7,719.3 1850.3,712.4C1828.9,705.5 1831.6,706.7 1810.2,697.2C1788.8,687.7 1791.5,688.7 1770.1,676.6C1748.7,664.5 1751.8,668.0 1730.0,651.9C1708.2,635.8 1710.1,638.3 1688.3,616.3C1666.5,594.3 1667.2,593.0 1648.2,569.4C1629.2,545.8 1623.3,542.3 1617.1,527.9C1610.9,513.5 1614.5,508.6 1624.8,515.4Z" fill="#6f98db" opacity="0.7" filter="url(#b2)"/>
<path d="M1613.1,534.5C1622.7,543.8 1625.2,553.9 1644.2,577.8C1663.2,601.7 1661.4,602.2 1684.3,624.3C1707.2,646.4 1707.1,644.7 1730.0,660.5C1752.9,676.3 1748.7,672.0 1770.1,683.4C1791.5,694.8 1788.8,694.0 1810.2,703.2C1831.6,712.4 1828.9,711.3 1850.3,717.8C1871.7,724.3 1869.0,723.2 1890.4,727.7C1911.8,732.2 1909.1,731.9 1930.5,734.8C1951.9,737.7 1949.2,737.2 1970.6,738.6C1992.0,740.0 1989.2,739.8 2010.6,740.2C2032.0,740.6 2032.0,740.3 2050.7,740.2C2069.4,740.1 2072.8,739.1 2080.8,739.8C2088.8,740.5 2088.8,741.9 2080.8,742.9C2072.8,743.9 2069.4,743.3 2050.7,743.6C2032.0,743.9 2032.0,744.2 2010.6,744.1C1989.2,744.0 1992.0,744.3 1970.6,743.2C1949.2,742.1 1951.9,742.5 1930.5,739.9C1909.1,737.3 1911.8,737.6 1890.4,733.5C1869.0,729.4 1871.7,730.7 1850.3,724.6C1828.9,718.5 1831.6,719.4 1810.2,710.7C1788.8,702.0 1791.5,702.4 1770.1,691.9C1748.7,681.4 1754.2,686.7 1730.0,671.3C1705.8,655.9 1703.5,656.4 1679.3,634.3C1655.1,612.2 1658.2,612.7 1639.2,588.3C1620.2,563.9 1615.1,557.1 1608.1,542.8C1601.1,528.5 1603.5,525.2 1613.1,534.5Z" fill="#407ccc" opacity="0.7" filter="url(#b2)"/>
<path d="M1629.2,508.1C1626.2,513.4 1626.8,513.1 1620.1,524.1C1613.4,535.1 1612.8,535.4 1609.1,541.1" fill="none" stroke="#407bca" stroke-width="1.2" stroke-linecap="round" opacity="0.6"/>
<polygon points="1494.4,607.1 1507.4,606.1 1520.4,608.1 1540.5,611.1 1550.5,616.1 1557.5,630.1 1562.5,650.2 1566.5,666.2 1590.6,660.2 1594.6,668.2 1600.6,678.2 1601.6,681.3 1594.6,683.3 1566.5,679.3 1540.5,690.3 1532.4,688.3 1522.4,679.3 1514.4,670.2 1506.4,658.2 1500.4,646.2 1496.4,636.2 1493.4,622.1 1491.3,611.1" fill="url(#grk)" />
<path d="M1507.4,606.5C1511.7,607.0 1509.4,606.6 1520.4,608.1C1531.4,609.6 1530.5,608.4 1540.5,611.1C1550.5,613.8 1547.2,614.4 1550.5,616.1" fill="none" stroke="#437ecb" stroke-width="1.3" stroke-linecap="round" />
<path d="M1540.5,690.3C1549.2,686.6 1548.5,681.6 1566.5,679.3C1584.5,677.0 1585.2,682.0 1594.6,683.3" fill="none" stroke="#3d79c6" stroke-width="1.5" stroke-linecap="round" />
<circle cx="1500.4" cy="622.5" r="4" fill="url(#rv)"/>
<circle cx="1522.4" cy="621.7" r="4" fill="url(#rv)"/>
<circle cx="1546.5" cy="667.6" r="4" fill="url(#rv)"/>
<circle cx="1527.4" cy="673.2" r="4" fill="url(#rv)"/>
<polygon points="1538.5,711.0 1560.5,717.1 1593.6,729.1 1601.6,733.1 1602.6,736.1 1598.6,746.1 1592.6,760.2 1594.6,764.2 1594.6,770.2 1589.6,774.2 1584.6,784.2 1578.5,800.3 1566.5,805.3 1552.5,807.3 1540.5,803.3 1532.4,794.2 1526.4,780.2 1522.4,774.2 1520.4,769.2 1516.4,766.2 1516.4,760.2 1520.4,748.1 1520.4,740.1 1524.4,737.1 1532.4,722.1" fill="url(#grg)" />
<path d="M1538.5,711.0C1545.8,713.0 1542.1,711.1 1560.5,717.1C1578.9,723.1 1582.6,725.1 1593.6,729.1" fill="none" stroke="#437ecb" stroke-width="1.3" stroke-linecap="round" />
<path d="M1522.4,774.2C1523.7,776.2 1523.1,773.5 1526.4,780.2C1529.7,786.9 1527.7,786.5 1532.4,794.2C1537.1,801.9 1533.8,798.9 1540.5,803.3C1547.2,807.7 1543.8,806.6 1552.5,807.3C1561.2,808.0 1557.8,807.6 1566.5,805.3C1575.2,803.0 1574.5,802.0 1578.5,800.3" fill="none" stroke="#3a77c4" stroke-width="1.8" stroke-linecap="round" />
<circle cx="1542.5" cy="737.1" r="4.2" fill="url(#rv)"/>
<circle cx="1557.5" cy="767.2" r="4.2" fill="url(#rv)"/>
<circle cx="1523.4" cy="743.1" r="4.2" fill="url(#rv)"/>
<circle cx="1588.6" cy="752.1" r="4.2" fill="url(#rv)"/></g>
</g>

<line x1="1558.5" y1="2" x2="1558.5" y2="666" stroke="#0b0f18" stroke-width="1.1"/>
<circle cx="1546" cy="157.8" r="2.9" fill="#f0a93a" stroke="#1d2535" stroke-width="1"/>
<path d="M490.5,841.4H506.5M518.5,841.4H534.5M512.5,819.4V835.4M512.5,847.4V863.4" stroke="#000" stroke-width="1.4" fill="none"/><circle cx="512.5" cy="841.4" r="11" fill="none" stroke="#fff" stroke-width="1.5"/><circle cx="512.5" cy="841.4" r="11" fill="none" stroke="#d03030" stroke-width="1.5" stroke-dasharray="4.32 4.32" stroke-dashoffset="2.16"/>
<path d="M1536.5,841.4H1552.5M1564.5,841.4H1580.5M1558.5,819.4V835.4M1558.5,847.4V863.4" stroke="#000" stroke-width="1.4" fill="none"/><circle cx="1558.5" cy="841.4" r="11" fill="none" stroke="#fff" stroke-width="1.5"/><circle cx="1558.5" cy="841.4" r="11" fill="none" stroke="#d03030" stroke-width="1.5" stroke-dasharray="4.32 4.32" stroke-dashoffset="2.16"/>

</svg>
<div class="ov" style="left:15px;top:8.5px">Front Orthographic</div><div class="ov" style="left:15px;top:28.5px;letter-spacing:0.35px">(19) HightDemonArmour (0)</div><div class="bar" style="left:180.6px;top:32.25px"></div><div class="ov" style="left:186.25px;top:28.5px">HightDemonHelmet (0)</div><div class="ov" style="left:15px;top:48.5px">10 Centimeters</div><div class="ov" style="left:15px;top:80.75px;line-height:19px">Objects</div><div class="ov n" style="left:80px;top:80.75px;line-height:19px">15</div><div class="ov" style="left:15px;top:99.75px;line-height:19px">Vertices</div><div class="ov n" style="left:80px;top:99.75px;line-height:19px">4,287</div><div class="ov" style="left:15px;top:118.75px;line-height:19px">Edges</div><div class="ov n" style="left:80px;top:118.75px;line-height:19px">8,304</div><div class="ov" style="left:15px;top:137.75px;line-height:19px">Faces</div><div class="ov n" style="left:80px;top:137.75px;line-height:19px">4,088</div><div class="ov" style="left:15px;top:156.75px;line-height:19px">Triangles</div><div class="ov n" style="left:80px;top:156.75px;line-height:19px">8,108</div><div class="ov" style="left:1061px;top:8.5px">Right Orthographic</div><div class="ov" style="left:1061px;top:28.5px;letter-spacing:0.35px">(19) HightDemonArmour (0)</div><div class="bar" style="left:1226.6px;top:32.25px"></div><div class="ov" style="left:1232.25px;top:28.5px">HightDemonHelmet (0)</div><div class="ov" style="left:1061px;top:48.5px">10 Centimeters</div><div class="ov" style="left:1061px;top:80.75px;line-height:19px">Objects</div><div class="ov n" style="left:1126px;top:80.75px;line-height:19px">15</div><div class="ov" style="left:1061px;top:99.75px;line-height:19px">Vertices</div><div class="ov n" style="left:1126px;top:99.75px;line-height:19px">4,287</div><div class="ov" style="left:1061px;top:118.75px;line-height:19px">Edges</div><div class="ov n" style="left:1126px;top:118.75px;line-height:19px">8,304</div><div class="ov" style="left:1061px;top:137.75px;line-height:19px">Faces</div><div class="ov n" style="left:1126px;top:137.75px;line-height:19px">4,088</div><div class="ov" style="left:1061px;top:156.75px;line-height:19px">Triangles</div><div class="ov n" style="left:1126px;top:156.75px;line-height:19px">8,108</div>
</body></html>
